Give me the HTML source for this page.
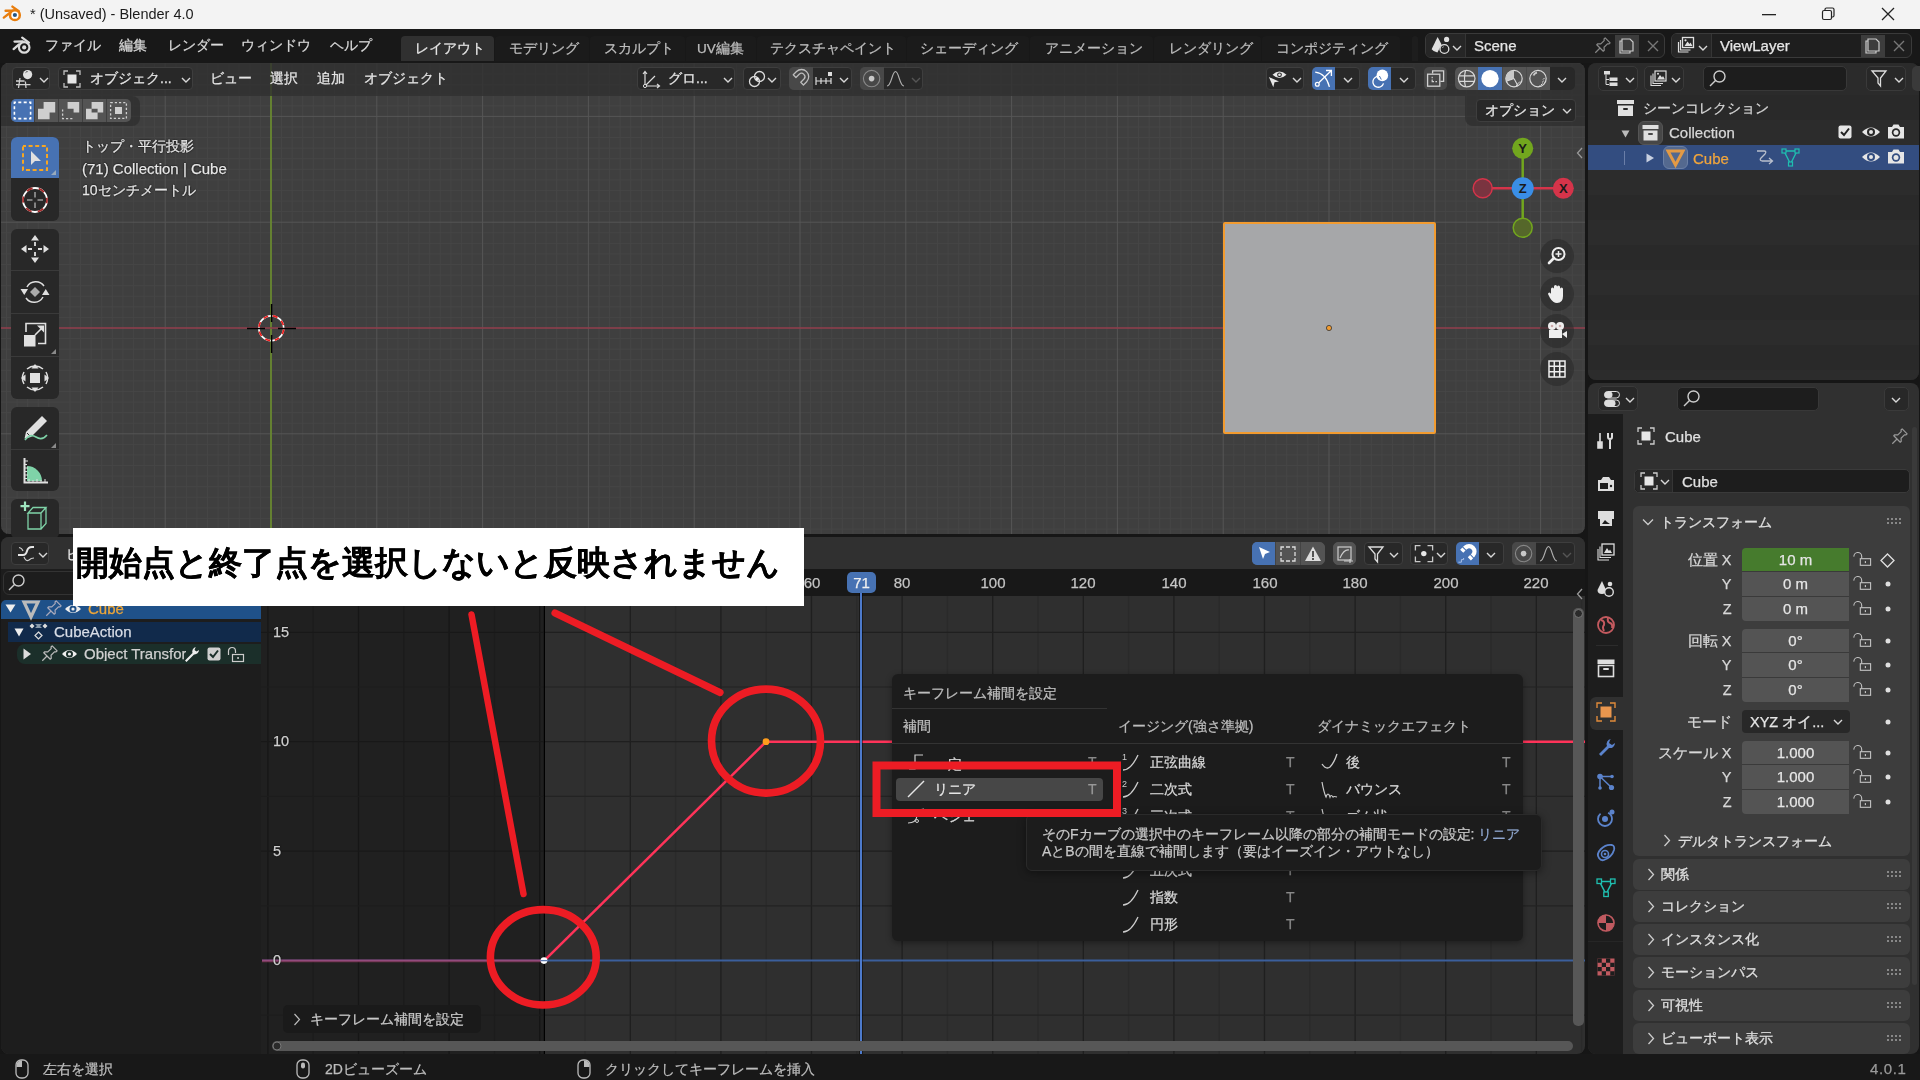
<!DOCTYPE html><html lang="ja"><head><meta charset="utf-8"><style>
*{box-sizing:border-box;margin:0;padding:0}
html,body{width:1920px;height:1080px;overflow:hidden;background:#161616;font-family:"Liberation Sans",sans-serif;color:#d6d6d6;font-size:14px}
.a{position:absolute}
.t{position:absolute;white-space:nowrap;line-height:1}
svg{overflow:visible}
.t{-webkit-font-smoothing:antialiased;will-change:transform;-webkit-text-stroke:0.25px currentColor}
</style></head><body><div class="a" style="left:0px;top:0px;width:1920px;height:29px;background:#f3f3f3;border-radius:0px;"></div>
<svg class="a" style="left:0px;top:0px;" width="30" height="29" viewBox="0 0 30 29"><path d="M12.4 6.6 L18.8 11.3 M5.6 10.7 L13.8 10.6 M3.8 17.6 L10 12.8" stroke="#e87d0d" stroke-width="2.4" stroke-linecap="round"/><circle cx="14.9" cy="15.2" r="4.9" fill="#fff" stroke="#e87d0d" stroke-width="2.5"/><circle cx="14.9" cy="15" r="2.1" fill="#265787"/></svg>
<div class="t" style="left:30px;top:6.5px;font-size:14.5px;color:#1b1b1b;-webkit-text-stroke:0">* (Unsaved) - Blender 4.0</div>
<svg class="a" style="left:1762px;top:14px;" width="18" height="2" viewBox="0 0 18 2"><rect width="14" height="1.3" fill="#222"/></svg>
<svg class="a" style="left:1821px;top:7px;" width="16" height="16" viewBox="0 0 16 16"><rect x="1.5" y="3.5" width="9" height="9" rx="1.5" fill="none" stroke="#222" stroke-width="1.2"/><path d="M4 3.5 V2.5 a1.5 1.5 0 0 1 1.5 -1.5 H11.5 a1.5 1.5 0 0 1 1.5 1.5 V8.5 a1.5 1.5 0 0 1 -1.5 1.5 H10.5" fill="none" stroke="#222" stroke-width="1.2"/></svg>
<svg class="a" style="left:1881px;top:7px;" width="16" height="16" viewBox="0 0 16 16"><path d="M1 1 L13 13 M13 1 L1 13" stroke="#222" stroke-width="1.3"/></svg>
<div class="a" style="left:0px;top:29px;width:1920px;height:34px;background:#181818;border-radius:0px;"></div>
<svg class="a" style="left:8px;top:32px;" width="30" height="28" viewBox="0 0 30 28"><path d="M14.2 5.6 L20.9 10.6 M6.5 9.6 L14.8 9.5 M5.6 17.1 L11 12.4" stroke="#dcdcdc" stroke-width="2.3" stroke-linecap="round"/><circle cx="16.2" cy="15.4" r="5.25" fill="#181818" stroke="#dcdcdc" stroke-width="2.2"/><circle cx="16.2" cy="15.4" r="2.1" fill="#dcdcdc"/></svg>
<div class="t" style="left:45px;top:38.5px;font-size:13.6px;color:#dadada;">ファイル</div>
<div class="t" style="left:119px;top:38.5px;font-size:13.6px;color:#dadada;">編集</div>
<div class="t" style="left:167.5px;top:38.5px;font-size:13.6px;color:#dadada;">レンダー</div>
<div class="t" style="left:240.5px;top:38.5px;font-size:13.6px;color:#dadada;">ウィンドウ</div>
<div class="t" style="left:330px;top:38.5px;font-size:13.6px;color:#dadada;">ヘルプ</div>
<div class="a" style="left:401px;top:36px;width:93px;height:25px;background:#303030;border-radius:4px 4px 0 0;"></div>
<div class="t" style="left:414.5px;top:41.5px;font-size:13.5px;color:#e6e6e6;">レイアウト</div>
<div class="a" style="left:495px;top:36px;width:94px;height:25px;background:#1b1b1b;border-radius:4px 4px 0 0;"></div>
<div class="t" style="left:508.5px;top:41.5px;font-size:13.5px;color:#bdbdbd;">モデリング</div>
<div class="a" style="left:590px;top:36px;width:95px;height:25px;background:#1b1b1b;border-radius:4px 4px 0 0;"></div>
<div class="t" style="left:604px;top:41.5px;font-size:13.5px;color:#bdbdbd;">スカルプト</div>
<div class="a" style="left:686px;top:36px;width:70px;height:25px;background:#1b1b1b;border-radius:4px 4px 0 0;"></div>
<div class="t" style="left:697px;top:41.5px;font-size:13.5px;color:#bdbdbd;">UV編集</div>
<div class="a" style="left:757px;top:36px;width:149px;height:25px;background:#1b1b1b;border-radius:4px 4px 0 0;"></div>
<div class="t" style="left:770px;top:41.5px;font-size:13.5px;color:#bdbdbd;">テクスチャペイント</div>
<div class="a" style="left:907px;top:36px;width:122px;height:25px;background:#1b1b1b;border-radius:4px 4px 0 0;"></div>
<div class="t" style="left:920px;top:41.5px;font-size:13.5px;color:#bdbdbd;">シェーディング</div>
<div class="a" style="left:1030px;top:36px;width:123px;height:25px;background:#1b1b1b;border-radius:4px 4px 0 0;"></div>
<div class="t" style="left:1044.5px;top:41.5px;font-size:13.5px;color:#bdbdbd;">アニメーション</div>
<div class="a" style="left:1154px;top:36px;width:107px;height:25px;background:#1b1b1b;border-radius:4px 4px 0 0;"></div>
<div class="t" style="left:1168.5px;top:41.5px;font-size:13.5px;color:#bdbdbd;">レンダリング</div>
<div class="a" style="left:1262px;top:36px;width:138px;height:25px;background:#1b1b1b;border-radius:4px 4px 0 0;"></div>
<div class="t" style="left:1276px;top:41.5px;font-size:13.5px;color:#bdbdbd;">コンポジティング</div>
<div class="a" style="left:1412px;top:36px;width:6px;height:25px;background:#1d1d1d;border-radius:4px 4px 0 0;"></div>
<div class="a" style="left:1425px;top:33px;width:240px;height:25px;background:#1e1e1e;border-radius:6px;border:1px solid #3a3a3a"></div>
<div class="a" style="left:1426px;top:34px;width:39px;height:23px;background:#262626;border-radius:5px 0 0 5px;"></div>
<div class="a" style="left:1465px;top:34px;width:1px;height:23px;background:#353535;border-radius:0px;"></div>
<svg class="a" style="left:1425px;top:33px;" width="40" height="25" viewBox="0 0 40 25"><path d="M12.6 4 L6.6 16.2 Q8.6 18.7 12.4 19.6 L16.6 11.4 Z" fill="#e0e0e0"/><circle cx="21.6" cy="6.4" r="2.6" fill="#e0e0e0"/><circle cx="19.4" cy="16" r="4.4" fill="#262626" stroke="#e0e0e0" stroke-width="1.3"/><path d="M17.4 14.6 L18.6 13.8" stroke="#ccc" stroke-width="1"/></svg>
<svg class="a" style="left:1452px;top:45px;" width="10" height="6" viewBox="0 0 10 6"><path d="M1 1 L5 5 L9 1" fill="none" stroke="#d8d8d8" stroke-width="1.4"/></svg>
<div class="t" style="left:1474px;top:38px;font-size:15px;color:#e6e6e6;">Scene</div>
<svg class="a" style="left:1592px;top:37px;" width="20" height="20" viewBox="0 0 20 20"><g transform="rotate(45 10 9)"><path d="M6.5 1 H13.5 V2.6 L12.3 3.6 V8.4 L14.6 10.4 V11.8 H5.4 V10.4 L7.7 8.4 V3.6 L6.5 2.6 Z" fill="none" stroke="#888" stroke-width="1.2" stroke-linejoin="round"/><path d="M10 11.8 V18.5" stroke="#888" stroke-width="1.2"/></g></svg>
<div class="a" style="left:1615px;top:35px;width:24px;height:22px;background:#3d3d3d;border-radius:0px;"></div>
<svg class="a" style="left:1617px;top:37px;" width="20" height="18" viewBox="0 0 20 18"><path d="M5 4 H3 V16 H13 V14" fill="none" stroke="#ccc" stroke-width="1.2"/><path d="M5 2 H13 L16 5 V14 H5Z" fill="none" stroke="#ccc" stroke-width="1.2"/></svg>
<svg class="a" style="left:1645px;top:38px;" width="16" height="16" viewBox="0 0 16 16"><path d="M3 3 L13 13 M13 3 L3 13" stroke="#777" stroke-width="1.4"/></svg>
<div class="a" style="left:1671px;top:33px;width:241px;height:25px;background:#1e1e1e;border-radius:6px;border:1px solid #3a3a3a"></div>
<div class="a" style="left:1672px;top:34px;width:39px;height:23px;background:#262626;border-radius:5px 0 0 5px;"></div>
<div class="a" style="left:1711px;top:34px;width:1px;height:23px;background:#353535;border-radius:0px;"></div>
<svg class="a" style="left:1672px;top:33px;" width="40" height="25" viewBox="0 0 40 25"><rect x="10.5" y="4.5" width="11" height="10" fill="#262626" stroke="#e0e0e0" stroke-width="1.3"/><path d="M12.5 13 L15.5 8.5 L17.5 11 L18.5 9.5 L20.5 13Z" fill="#e0e0e0"/><circle cx="13.5" cy="7.3" r="1.1" fill="#e0e0e0"/><path d="M8.5 7 V17 H18.5 M6.5 9 V19 H16.5" fill="none" stroke="#e0e0e0" stroke-width="1.2"/></svg>
<svg class="a" style="left:1698px;top:45px;" width="10" height="6" viewBox="0 0 10 6"><path d="M1 1 L5 5 L9 1" fill="none" stroke="#d8d8d8" stroke-width="1.4"/></svg>
<div class="t" style="left:1720px;top:38px;font-size:15px;color:#e6e6e6;">ViewLayer</div>
<div class="a" style="left:1861px;top:35px;width:24px;height:22px;background:#3d3d3d;border-radius:0px;"></div>
<svg class="a" style="left:1863px;top:37px;" width="20" height="18" viewBox="0 0 20 18"><path d="M5 4 H3 V16 H13 V14" fill="none" stroke="#ccc" stroke-width="1.2"/><path d="M5 2 H13 L16 5 V14 H5Z" fill="none" stroke="#ccc" stroke-width="1.2"/></svg>
<svg class="a" style="left:1891px;top:38px;" width="16" height="16" viewBox="0 0 16 16"><path d="M3 3 L13 13 M13 3 L3 13" stroke="#777" stroke-width="1.4"/></svg>
<div class="a" style="left:1px;top:63px;width:1584px;height:471px;border-radius:8px;overflow:hidden;background:#3f3f3f">
<svg class="a" style="left:0;top:0" width="1584" height="471"><line x1="-5.08" y1="0" x2="-5.08" y2="471" stroke="#464646" stroke-width="1"/><line x1="5.50" y1="0" x2="5.50" y2="471" stroke="#464646" stroke-width="1"/><line x1="16.08" y1="0" x2="16.08" y2="471" stroke="#464646" stroke-width="1"/><line x1="26.66" y1="0" x2="26.66" y2="471" stroke="#464646" stroke-width="1"/><line x1="37.24" y1="0" x2="37.24" y2="471" stroke="#464646" stroke-width="1"/><line x1="47.82" y1="0" x2="47.82" y2="471" stroke="#464646" stroke-width="1"/><line x1="68.98" y1="0" x2="68.98" y2="471" stroke="#464646" stroke-width="1"/><line x1="79.56" y1="0" x2="79.56" y2="471" stroke="#464646" stroke-width="1"/><line x1="90.14" y1="0" x2="90.14" y2="471" stroke="#464646" stroke-width="1"/><line x1="100.72" y1="0" x2="100.72" y2="471" stroke="#464646" stroke-width="1"/><line x1="111.30" y1="0" x2="111.30" y2="471" stroke="#464646" stroke-width="1"/><line x1="121.88" y1="0" x2="121.88" y2="471" stroke="#464646" stroke-width="1"/><line x1="132.46" y1="0" x2="132.46" y2="471" stroke="#464646" stroke-width="1"/><line x1="143.04" y1="0" x2="143.04" y2="471" stroke="#464646" stroke-width="1"/><line x1="153.62" y1="0" x2="153.62" y2="471" stroke="#464646" stroke-width="1"/><line x1="174.78" y1="0" x2="174.78" y2="471" stroke="#464646" stroke-width="1"/><line x1="185.36" y1="0" x2="185.36" y2="471" stroke="#464646" stroke-width="1"/><line x1="195.94" y1="0" x2="195.94" y2="471" stroke="#464646" stroke-width="1"/><line x1="206.52" y1="0" x2="206.52" y2="471" stroke="#464646" stroke-width="1"/><line x1="217.10" y1="0" x2="217.10" y2="471" stroke="#464646" stroke-width="1"/><line x1="227.68" y1="0" x2="227.68" y2="471" stroke="#464646" stroke-width="1"/><line x1="238.26" y1="0" x2="238.26" y2="471" stroke="#464646" stroke-width="1"/><line x1="248.84" y1="0" x2="248.84" y2="471" stroke="#464646" stroke-width="1"/><line x1="259.42" y1="0" x2="259.42" y2="471" stroke="#464646" stroke-width="1"/><line x1="280.58" y1="0" x2="280.58" y2="471" stroke="#464646" stroke-width="1"/><line x1="291.16" y1="0" x2="291.16" y2="471" stroke="#464646" stroke-width="1"/><line x1="301.74" y1="0" x2="301.74" y2="471" stroke="#464646" stroke-width="1"/><line x1="312.32" y1="0" x2="312.32" y2="471" stroke="#464646" stroke-width="1"/><line x1="322.90" y1="0" x2="322.90" y2="471" stroke="#464646" stroke-width="1"/><line x1="333.48" y1="0" x2="333.48" y2="471" stroke="#464646" stroke-width="1"/><line x1="344.06" y1="0" x2="344.06" y2="471" stroke="#464646" stroke-width="1"/><line x1="354.64" y1="0" x2="354.64" y2="471" stroke="#464646" stroke-width="1"/><line x1="365.22" y1="0" x2="365.22" y2="471" stroke="#464646" stroke-width="1"/><line x1="386.38" y1="0" x2="386.38" y2="471" stroke="#464646" stroke-width="1"/><line x1="396.96" y1="0" x2="396.96" y2="471" stroke="#464646" stroke-width="1"/><line x1="407.54" y1="0" x2="407.54" y2="471" stroke="#464646" stroke-width="1"/><line x1="418.12" y1="0" x2="418.12" y2="471" stroke="#464646" stroke-width="1"/><line x1="428.70" y1="0" x2="428.70" y2="471" stroke="#464646" stroke-width="1"/><line x1="439.28" y1="0" x2="439.28" y2="471" stroke="#464646" stroke-width="1"/><line x1="449.86" y1="0" x2="449.86" y2="471" stroke="#464646" stroke-width="1"/><line x1="460.44" y1="0" x2="460.44" y2="471" stroke="#464646" stroke-width="1"/><line x1="471.02" y1="0" x2="471.02" y2="471" stroke="#464646" stroke-width="1"/><line x1="492.18" y1="0" x2="492.18" y2="471" stroke="#464646" stroke-width="1"/><line x1="502.76" y1="0" x2="502.76" y2="471" stroke="#464646" stroke-width="1"/><line x1="513.34" y1="0" x2="513.34" y2="471" stroke="#464646" stroke-width="1"/><line x1="523.92" y1="0" x2="523.92" y2="471" stroke="#464646" stroke-width="1"/><line x1="534.50" y1="0" x2="534.50" y2="471" stroke="#464646" stroke-width="1"/><line x1="545.08" y1="0" x2="545.08" y2="471" stroke="#464646" stroke-width="1"/><line x1="555.66" y1="0" x2="555.66" y2="471" stroke="#464646" stroke-width="1"/><line x1="566.24" y1="0" x2="566.24" y2="471" stroke="#464646" stroke-width="1"/><line x1="576.82" y1="0" x2="576.82" y2="471" stroke="#464646" stroke-width="1"/><line x1="597.98" y1="0" x2="597.98" y2="471" stroke="#464646" stroke-width="1"/><line x1="608.56" y1="0" x2="608.56" y2="471" stroke="#464646" stroke-width="1"/><line x1="619.14" y1="0" x2="619.14" y2="471" stroke="#464646" stroke-width="1"/><line x1="629.72" y1="0" x2="629.72" y2="471" stroke="#464646" stroke-width="1"/><line x1="640.30" y1="0" x2="640.30" y2="471" stroke="#464646" stroke-width="1"/><line x1="650.88" y1="0" x2="650.88" y2="471" stroke="#464646" stroke-width="1"/><line x1="661.46" y1="0" x2="661.46" y2="471" stroke="#464646" stroke-width="1"/><line x1="672.04" y1="0" x2="672.04" y2="471" stroke="#464646" stroke-width="1"/><line x1="682.62" y1="0" x2="682.62" y2="471" stroke="#464646" stroke-width="1"/><line x1="703.78" y1="0" x2="703.78" y2="471" stroke="#464646" stroke-width="1"/><line x1="714.36" y1="0" x2="714.36" y2="471" stroke="#464646" stroke-width="1"/><line x1="724.94" y1="0" x2="724.94" y2="471" stroke="#464646" stroke-width="1"/><line x1="735.52" y1="0" x2="735.52" y2="471" stroke="#464646" stroke-width="1"/><line x1="746.10" y1="0" x2="746.10" y2="471" stroke="#464646" stroke-width="1"/><line x1="756.68" y1="0" x2="756.68" y2="471" stroke="#464646" stroke-width="1"/><line x1="767.26" y1="0" x2="767.26" y2="471" stroke="#464646" stroke-width="1"/><line x1="777.84" y1="0" x2="777.84" y2="471" stroke="#464646" stroke-width="1"/><line x1="788.42" y1="0" x2="788.42" y2="471" stroke="#464646" stroke-width="1"/><line x1="809.58" y1="0" x2="809.58" y2="471" stroke="#464646" stroke-width="1"/><line x1="820.16" y1="0" x2="820.16" y2="471" stroke="#464646" stroke-width="1"/><line x1="830.74" y1="0" x2="830.74" y2="471" stroke="#464646" stroke-width="1"/><line x1="841.32" y1="0" x2="841.32" y2="471" stroke="#464646" stroke-width="1"/><line x1="851.90" y1="0" x2="851.90" y2="471" stroke="#464646" stroke-width="1"/><line x1="862.48" y1="0" x2="862.48" y2="471" stroke="#464646" stroke-width="1"/><line x1="873.06" y1="0" x2="873.06" y2="471" stroke="#464646" stroke-width="1"/><line x1="883.64" y1="0" x2="883.64" y2="471" stroke="#464646" stroke-width="1"/><line x1="894.22" y1="0" x2="894.22" y2="471" stroke="#464646" stroke-width="1"/><line x1="915.38" y1="0" x2="915.38" y2="471" stroke="#464646" stroke-width="1"/><line x1="925.96" y1="0" x2="925.96" y2="471" stroke="#464646" stroke-width="1"/><line x1="936.54" y1="0" x2="936.54" y2="471" stroke="#464646" stroke-width="1"/><line x1="947.12" y1="0" x2="947.12" y2="471" stroke="#464646" stroke-width="1"/><line x1="957.70" y1="0" x2="957.70" y2="471" stroke="#464646" stroke-width="1"/><line x1="968.28" y1="0" x2="968.28" y2="471" stroke="#464646" stroke-width="1"/><line x1="978.86" y1="0" x2="978.86" y2="471" stroke="#464646" stroke-width="1"/><line x1="989.44" y1="0" x2="989.44" y2="471" stroke="#464646" stroke-width="1"/><line x1="1000.02" y1="0" x2="1000.02" y2="471" stroke="#464646" stroke-width="1"/><line x1="1021.18" y1="0" x2="1021.18" y2="471" stroke="#464646" stroke-width="1"/><line x1="1031.76" y1="0" x2="1031.76" y2="471" stroke="#464646" stroke-width="1"/><line x1="1042.34" y1="0" x2="1042.34" y2="471" stroke="#464646" stroke-width="1"/><line x1="1052.92" y1="0" x2="1052.92" y2="471" stroke="#464646" stroke-width="1"/><line x1="1063.50" y1="0" x2="1063.50" y2="471" stroke="#464646" stroke-width="1"/><line x1="1074.08" y1="0" x2="1074.08" y2="471" stroke="#464646" stroke-width="1"/><line x1="1084.66" y1="0" x2="1084.66" y2="471" stroke="#464646" stroke-width="1"/><line x1="1095.24" y1="0" x2="1095.24" y2="471" stroke="#464646" stroke-width="1"/><line x1="1105.82" y1="0" x2="1105.82" y2="471" stroke="#464646" stroke-width="1"/><line x1="1126.98" y1="0" x2="1126.98" y2="471" stroke="#464646" stroke-width="1"/><line x1="1137.56" y1="0" x2="1137.56" y2="471" stroke="#464646" stroke-width="1"/><line x1="1148.14" y1="0" x2="1148.14" y2="471" stroke="#464646" stroke-width="1"/><line x1="1158.72" y1="0" x2="1158.72" y2="471" stroke="#464646" stroke-width="1"/><line x1="1169.30" y1="0" x2="1169.30" y2="471" stroke="#464646" stroke-width="1"/><line x1="1179.88" y1="0" x2="1179.88" y2="471" stroke="#464646" stroke-width="1"/><line x1="1190.46" y1="0" x2="1190.46" y2="471" stroke="#464646" stroke-width="1"/><line x1="1201.04" y1="0" x2="1201.04" y2="471" stroke="#464646" stroke-width="1"/><line x1="1211.62" y1="0" x2="1211.62" y2="471" stroke="#464646" stroke-width="1"/><line x1="1232.78" y1="0" x2="1232.78" y2="471" stroke="#464646" stroke-width="1"/><line x1="1243.36" y1="0" x2="1243.36" y2="471" stroke="#464646" stroke-width="1"/><line x1="1253.94" y1="0" x2="1253.94" y2="471" stroke="#464646" stroke-width="1"/><line x1="1264.52" y1="0" x2="1264.52" y2="471" stroke="#464646" stroke-width="1"/><line x1="1275.10" y1="0" x2="1275.10" y2="471" stroke="#464646" stroke-width="1"/><line x1="1285.68" y1="0" x2="1285.68" y2="471" stroke="#464646" stroke-width="1"/><line x1="1296.26" y1="0" x2="1296.26" y2="471" stroke="#464646" stroke-width="1"/><line x1="1306.84" y1="0" x2="1306.84" y2="471" stroke="#464646" stroke-width="1"/><line x1="1317.42" y1="0" x2="1317.42" y2="471" stroke="#464646" stroke-width="1"/><line x1="1338.58" y1="0" x2="1338.58" y2="471" stroke="#464646" stroke-width="1"/><line x1="1349.16" y1="0" x2="1349.16" y2="471" stroke="#464646" stroke-width="1"/><line x1="1359.74" y1="0" x2="1359.74" y2="471" stroke="#464646" stroke-width="1"/><line x1="1370.32" y1="0" x2="1370.32" y2="471" stroke="#464646" stroke-width="1"/><line x1="1380.90" y1="0" x2="1380.90" y2="471" stroke="#464646" stroke-width="1"/><line x1="1391.48" y1="0" x2="1391.48" y2="471" stroke="#464646" stroke-width="1"/><line x1="1402.06" y1="0" x2="1402.06" y2="471" stroke="#464646" stroke-width="1"/><line x1="1412.64" y1="0" x2="1412.64" y2="471" stroke="#464646" stroke-width="1"/><line x1="1423.22" y1="0" x2="1423.22" y2="471" stroke="#464646" stroke-width="1"/><line x1="1444.38" y1="0" x2="1444.38" y2="471" stroke="#464646" stroke-width="1"/><line x1="1454.96" y1="0" x2="1454.96" y2="471" stroke="#464646" stroke-width="1"/><line x1="1465.54" y1="0" x2="1465.54" y2="471" stroke="#464646" stroke-width="1"/><line x1="1476.12" y1="0" x2="1476.12" y2="471" stroke="#464646" stroke-width="1"/><line x1="1486.70" y1="0" x2="1486.70" y2="471" stroke="#464646" stroke-width="1"/><line x1="1497.28" y1="0" x2="1497.28" y2="471" stroke="#464646" stroke-width="1"/><line x1="1507.86" y1="0" x2="1507.86" y2="471" stroke="#464646" stroke-width="1"/><line x1="1518.44" y1="0" x2="1518.44" y2="471" stroke="#464646" stroke-width="1"/><line x1="1529.02" y1="0" x2="1529.02" y2="471" stroke="#464646" stroke-width="1"/><line x1="1550.18" y1="0" x2="1550.18" y2="471" stroke="#464646" stroke-width="1"/><line x1="1560.76" y1="0" x2="1560.76" y2="471" stroke="#464646" stroke-width="1"/><line x1="1571.34" y1="0" x2="1571.34" y2="471" stroke="#464646" stroke-width="1"/><line x1="1581.92" y1="0" x2="1581.92" y2="471" stroke="#464646" stroke-width="1"/><line x1="1592.50" y1="0" x2="1592.50" y2="471" stroke="#464646" stroke-width="1"/><line x1="0" y1="-10.08" x2="1584" y2="-10.08" stroke="#464646" stroke-width="1"/><line x1="0" y1="0.50" x2="1584" y2="0.50" stroke="#464646" stroke-width="1"/><line x1="0" y1="11.08" x2="1584" y2="11.08" stroke="#464646" stroke-width="1"/><line x1="0" y1="21.66" x2="1584" y2="21.66" stroke="#464646" stroke-width="1"/><line x1="0" y1="32.24" x2="1584" y2="32.24" stroke="#464646" stroke-width="1"/><line x1="0" y1="42.82" x2="1584" y2="42.82" stroke="#464646" stroke-width="1"/><line x1="0" y1="63.98" x2="1584" y2="63.98" stroke="#464646" stroke-width="1"/><line x1="0" y1="74.56" x2="1584" y2="74.56" stroke="#464646" stroke-width="1"/><line x1="0" y1="85.14" x2="1584" y2="85.14" stroke="#464646" stroke-width="1"/><line x1="0" y1="95.72" x2="1584" y2="95.72" stroke="#464646" stroke-width="1"/><line x1="0" y1="106.30" x2="1584" y2="106.30" stroke="#464646" stroke-width="1"/><line x1="0" y1="116.88" x2="1584" y2="116.88" stroke="#464646" stroke-width="1"/><line x1="0" y1="127.46" x2="1584" y2="127.46" stroke="#464646" stroke-width="1"/><line x1="0" y1="138.04" x2="1584" y2="138.04" stroke="#464646" stroke-width="1"/><line x1="0" y1="148.62" x2="1584" y2="148.62" stroke="#464646" stroke-width="1"/><line x1="0" y1="169.78" x2="1584" y2="169.78" stroke="#464646" stroke-width="1"/><line x1="0" y1="180.36" x2="1584" y2="180.36" stroke="#464646" stroke-width="1"/><line x1="0" y1="190.94" x2="1584" y2="190.94" stroke="#464646" stroke-width="1"/><line x1="0" y1="201.52" x2="1584" y2="201.52" stroke="#464646" stroke-width="1"/><line x1="0" y1="212.10" x2="1584" y2="212.10" stroke="#464646" stroke-width="1"/><line x1="0" y1="222.68" x2="1584" y2="222.68" stroke="#464646" stroke-width="1"/><line x1="0" y1="233.26" x2="1584" y2="233.26" stroke="#464646" stroke-width="1"/><line x1="0" y1="243.84" x2="1584" y2="243.84" stroke="#464646" stroke-width="1"/><line x1="0" y1="254.42" x2="1584" y2="254.42" stroke="#464646" stroke-width="1"/><line x1="0" y1="275.58" x2="1584" y2="275.58" stroke="#464646" stroke-width="1"/><line x1="0" y1="286.16" x2="1584" y2="286.16" stroke="#464646" stroke-width="1"/><line x1="0" y1="296.74" x2="1584" y2="296.74" stroke="#464646" stroke-width="1"/><line x1="0" y1="307.32" x2="1584" y2="307.32" stroke="#464646" stroke-width="1"/><line x1="0" y1="317.90" x2="1584" y2="317.90" stroke="#464646" stroke-width="1"/><line x1="0" y1="328.48" x2="1584" y2="328.48" stroke="#464646" stroke-width="1"/><line x1="0" y1="339.06" x2="1584" y2="339.06" stroke="#464646" stroke-width="1"/><line x1="0" y1="349.64" x2="1584" y2="349.64" stroke="#464646" stroke-width="1"/><line x1="0" y1="360.22" x2="1584" y2="360.22" stroke="#464646" stroke-width="1"/><line x1="0" y1="381.38" x2="1584" y2="381.38" stroke="#464646" stroke-width="1"/><line x1="0" y1="391.96" x2="1584" y2="391.96" stroke="#464646" stroke-width="1"/><line x1="0" y1="402.54" x2="1584" y2="402.54" stroke="#464646" stroke-width="1"/><line x1="0" y1="413.12" x2="1584" y2="413.12" stroke="#464646" stroke-width="1"/><line x1="0" y1="423.70" x2="1584" y2="423.70" stroke="#464646" stroke-width="1"/><line x1="0" y1="434.28" x2="1584" y2="434.28" stroke="#464646" stroke-width="1"/><line x1="0" y1="444.86" x2="1584" y2="444.86" stroke="#464646" stroke-width="1"/><line x1="0" y1="455.44" x2="1584" y2="455.44" stroke="#464646" stroke-width="1"/><line x1="0" y1="466.02" x2="1584" y2="466.02" stroke="#464646" stroke-width="1"/><line x1="164.20" y1="0" x2="164.20" y2="471" stroke="#565656" stroke-width="1"/><line x1="270.00" y1="0" x2="270.00" y2="471" stroke="#565656" stroke-width="1"/><line x1="375.80" y1="0" x2="375.80" y2="471" stroke="#565656" stroke-width="1"/><line x1="481.60" y1="0" x2="481.60" y2="471" stroke="#565656" stroke-width="1"/><line x1="587.40" y1="0" x2="587.40" y2="471" stroke="#565656" stroke-width="1"/><line x1="693.20" y1="0" x2="693.20" y2="471" stroke="#565656" stroke-width="1"/><line x1="799.00" y1="0" x2="799.00" y2="471" stroke="#565656" stroke-width="1"/><line x1="904.80" y1="0" x2="904.80" y2="471" stroke="#565656" stroke-width="1"/><line x1="1010.60" y1="0" x2="1010.60" y2="471" stroke="#565656" stroke-width="1"/><line x1="1116.40" y1="0" x2="1116.40" y2="471" stroke="#565656" stroke-width="1"/><line x1="1222.20" y1="0" x2="1222.20" y2="471" stroke="#565656" stroke-width="1"/><line x1="1328.00" y1="0" x2="1328.00" y2="471" stroke="#565656" stroke-width="1"/><line x1="1433.80" y1="0" x2="1433.80" y2="471" stroke="#565656" stroke-width="1"/><line x1="1539.60" y1="0" x2="1539.60" y2="471" stroke="#565656" stroke-width="1"/><line x1="1645.40" y1="0" x2="1645.40" y2="471" stroke="#565656" stroke-width="1"/><line x1="0" y1="-52.40" x2="1584" y2="-52.40" stroke="#565656" stroke-width="1"/><line x1="0" y1="53.40" x2="1584" y2="53.40" stroke="#565656" stroke-width="1"/><line x1="0" y1="159.20" x2="1584" y2="159.20" stroke="#565656" stroke-width="1"/><line x1="0" y1="265.00" x2="1584" y2="265.00" stroke="#565656" stroke-width="1"/><line x1="0" y1="370.80" x2="1584" y2="370.80" stroke="#565656" stroke-width="1"/><line x1="0" y1="476.60" x2="1584" y2="476.60" stroke="#565656" stroke-width="1"/><line x1="270" y1="0" x2="270" y2="471" stroke="#6b8f2b" stroke-width="1.6"/><line x1="0" y1="265" x2="1584" y2="265" stroke="#8f3b4a" stroke-width="1.6"/></svg>
</div>
<div class="a" style="left:1px;top:63px;width:1584px;height:33px;background:rgba(48,48,48,0.8);border-radius:8px 8px 0 0;"></div>
<div class="a" style="left:12px;top:67px;width:38px;height:23px;background:#282828;border-radius:4px;border:1px solid #3e3e3e"></div>
<svg class="a" style="left:12px;top:67px;" width="38" height="23" viewBox="0 0 38 23"><circle cx="15.6" cy="7.6" r="4.6" fill="#e0e0e0"/><path d="M13.6 5.6 A2.4 2.4 0 0 1 15.6 4.6" stroke="#282828" stroke-width="0.9" fill="none"/><path d="M4 14 H12.5 M4 17.6 H18.5 M8 11 L6.5 21 M13.4 14.5 L14 21" stroke="#d0d0d0" stroke-width="1.3" fill="none"/></svg>
<svg class="a" style="left:39px;top:77px;" width="10" height="6" viewBox="0 0 10 6"><path d="M1 1 L5 5 L9 1" fill="none" stroke="#d8d8d8" stroke-width="1.4"/></svg>
<div class="a" style="left:58px;top:67px;width:135px;height:23px;background:#282828;border-radius:4px;border:1px solid #3e3e3e"></div>
<svg class="a" style="left:63px;top:70px;" width="18" height="18" viewBox="0 0 18 18"><path d="M1 5 V1 H5 M13 1 H17 V5 M17 13 V17 H13 M5 17 H1 V13" stroke="#bdbdbd" stroke-width="1.3" fill="none"/><rect x="4.5" y="4.5" width="9" height="9" fill="#e6e6e6"/></svg>
<div class="t" style="left:90px;top:71px;font-size:14px;color:#e6e6e6;">オブジェク...</div>
<svg class="a" style="left:181px;top:77px;" width="10" height="6" viewBox="0 0 10 6"><path d="M1 1 L5 5 L9 1" fill="none" stroke="#d8d8d8" stroke-width="1.4"/></svg>
<div class="t" style="left:210px;top:71px;font-size:14px;color:#e6e6e6;">ビュー</div>
<div class="t" style="left:270px;top:71px;font-size:14px;color:#e6e6e6;">選択</div>
<div class="t" style="left:317px;top:71px;font-size:14px;color:#e6e6e6;">追加</div>
<div class="t" style="left:364px;top:71px;font-size:14px;color:#e6e6e6;">オブジェクト</div>
<div class="a" style="left:637px;top:67px;width:98px;height:23px;background:#282828;border-radius:4px;border:1px solid #3e3e3e"></div>
<svg class="a" style="left:642px;top:70px;" width="20" height="18" viewBox="0 0 20 18"><path d="M3 16 V2 M1 4 L3 1.5 L5 4 M3 16 H17 M15 14 L17.5 16 L15 18 M3 16 L13 6" stroke="#dcdcdc" stroke-width="1.2" fill="none"/><circle cx="3" cy="16" r="1.6" fill="#282828" stroke="#dcdcdc"/></svg>
<div class="t" style="left:668px;top:71px;font-size:14px;color:#e6e6e6;">グロ...</div>
<svg class="a" style="left:723px;top:77px;" width="10" height="6" viewBox="0 0 10 6"><path d="M1 1 L5 5 L9 1" fill="none" stroke="#d8d8d8" stroke-width="1.4"/></svg>
<div class="a" style="left:743px;top:67px;width:38px;height:23px;background:#282828;border-radius:4px;border:1px solid #3e3e3e"></div>
<svg class="a" style="left:748px;top:70px;" width="20" height="18" viewBox="0 0 20 18"><circle cx="6.5" cy="11.5" r="5" fill="none" stroke="#dcdcdc" stroke-width="1.3"/><circle cx="11.5" cy="6.5" r="5" fill="none" stroke="#dcdcdc" stroke-width="1.3"/><circle cx="9" cy="9" r="1.5" fill="#eee"/></svg>
<svg class="a" style="left:767px;top:77px;" width="10" height="6" viewBox="0 0 10 6"><path d="M1 1 L5 5 L9 1" fill="none" stroke="#d8d8d8" stroke-width="1.4"/></svg>
<div class="a" style="left:789px;top:67px;width:63px;height:23px;background:#282828;border-radius:4px;border:1px solid #3e3e3e"></div>
<div class="a" style="left:789px;top:67px;width:24px;height:23px;background:#484848;border-radius:5px 0 0 5px;"></div>
<svg class="a" style="left:789px;top:67px;" width="24" height="23" viewBox="0 0 24 23"><path d="M4.26 7.76 L7.51 4.51 A7.2 7.2 0 0 1 17.69 14.69 L14.44 17.94 L11.75 15.26 L15.00 12.00 A3.4 3.4 0 0 0 10.20 7.20 L6.94 10.45 Z" fill="none" stroke="#bdbdbd" stroke-width="1.3" stroke-linejoin="round"/></svg>
<svg class="a" style="left:815px;top:72px;" width="18" height="14" viewBox="0 0 18 14"><path d="M1 5 V13 M1 9 H16 M6 6 V12 M11 6 V12 M16 6 V12" stroke="#ddd" stroke-width="1.2" fill="none"/><rect x="13" y="0" width="4" height="4" fill="#ddd"/></svg>
<svg class="a" style="left:839px;top:77px;" width="10" height="6" viewBox="0 0 10 6"><path d="M1 1 L5 5 L9 1" fill="none" stroke="#d8d8d8" stroke-width="1.4"/></svg>
<div class="a" style="left:860px;top:67px;width:63px;height:23px;background:#282828;border-radius:4px;border:1px solid #3e3e3e"></div>
<div class="a" style="left:860px;top:67px;width:24px;height:23px;background:#484848;border-radius:5px 0 0 5px;"></div>
<svg class="a" style="left:860px;top:67px;" width="24" height="23" viewBox="0 0 24 23"><circle cx="11.6" cy="11.6" r="8.2" fill="none" stroke="#888" stroke-width="1.1"/><circle cx="11.6" cy="11.6" r="2.8" fill="#c8c8c8"/></svg>
<svg class="a" style="left:886px;top:70px;" width="20" height="18" viewBox="0 0 20 18"><path d="M1 16 C5.5 16 6 1.5 9.5 1.5 C13 1.5 13.5 16 18 16" fill="none" stroke="#b0b0b0" stroke-width="1.2"/></svg>
<svg class="a" style="left:911px;top:77px;" width="10" height="6" viewBox="0 0 10 6"><path d="M1 1 L5 5 L9 1" fill="none" stroke="#555" stroke-width="1.4"/></svg>
<div class="a" style="left:1266px;top:67px;width:38px;height:23px;background:#282828;border-radius:4px;border:1px solid #3e3e3e"></div>
<svg class="a" style="left:1266px;top:67px;" width="38" height="23" viewBox="0 0 38 23"><path d="M6.5 4 Q13.5 -2.5 20.5 4 Q13.5 10.5 6.5 4Z" fill="#e6e6e6" transform="translate(0,3.8)"/><circle cx="13.5" cy="7.8" r="2.4" fill="#282828"/><circle cx="13.5" cy="7.8" r="1.3" fill="#e6e6e6"/><path d="M2.9 10 L7.3 20.2 L8.5 15.3 L13 14.5 Z" fill="#e6e6e6"/></svg>
<svg class="a" style="left:1292px;top:77px;" width="10" height="6" viewBox="0 0 10 6"><path d="M1 1 L5 5 L9 1" fill="none" stroke="#d8d8d8" stroke-width="1.4"/></svg>
<div class="a" style="left:1312px;top:67px;width:48px;height:23px;background:#282828;border-radius:4px;border:1px solid #3e3e3e"></div>
<div class="a" style="left:1312px;top:67px;width:23px;height:23px;background:#4772b3;border-radius:5px 0 0 5px;"></div>
<svg class="a" style="left:1312px;top:67px;" width="23" height="23" viewBox="0 0 23 23"><path d="M3.2 5.2 Q14 6.5 17.4 19.8" fill="none" stroke="#fff" stroke-width="1.3"/><circle cx="5.3" cy="17.3" r="1.9" fill="none" stroke="#fff" stroke-width="1.3"/><path d="M6.8 15.8 L19.4 3.5 M14 3.5 H19.4 V9" fill="none" stroke="#fff" stroke-width="1.3"/></svg>
<svg class="a" style="left:1343px;top:77px;" width="10" height="6" viewBox="0 0 10 6"><path d="M1 1 L5 5 L9 1" fill="none" stroke="#d8d8d8" stroke-width="1.4"/></svg>
<div class="a" style="left:1368px;top:67px;width:48px;height:23px;background:#282828;border-radius:4px;border:1px solid #3e3e3e"></div>
<div class="a" style="left:1368px;top:67px;width:23px;height:23px;background:#4772b3;border-radius:5px 0 0 5px;"></div>
<svg class="a" style="left:1368px;top:67px;" width="23" height="23" viewBox="0 0 23 23"><circle cx="14.3" cy="8.4" r="5.8" fill="#fff"/><path d="M11 9.5 A5.4 5.4 0 1 0 15.5 16.3" fill="none" stroke="#fff" stroke-width="1.3"/><path d="M11.4 9 L13.3 12.5" stroke="#4772b3" stroke-width="1"/></svg>
<svg class="a" style="left:1399px;top:77px;" width="10" height="6" viewBox="0 0 10 6"><path d="M1 1 L5 5 L9 1" fill="none" stroke="#d8d8d8" stroke-width="1.4"/></svg>
<div class="a" style="left:1424px;top:67px;width:23px;height:23px;background:#484848;border-radius:5px;"></div>
<svg class="a" style="left:1424px;top:67px;" width="23" height="23" viewBox="0 0 23 23"><path d="M8.6 6.6 V3.9 H19.6 V14.4 H16.4" fill="none" stroke="#d0d0d0" stroke-width="1.3"/><rect x="3.6" y="7.2" width="12.2" height="12" fill="none" stroke="#d0d0d0" stroke-width="1.3"/><path d="M8.2 9.8 V11.2 M8.2 12.6 V14.6 H10 M11.4 14.6 H13" stroke="#d0d0d0" stroke-width="1.2" fill="none"/></svg>
<div class="a" style="left:1455px;top:67px;width:120px;height:23px;background:#282828;border-radius:5px;"></div>
<div class="a" style="left:1455px;top:67px;width:23px;height:23px;background:#545454;border-radius:5px 0 0 5px;"></div>
<div class="a" style="left:1478px;top:67px;width:24px;height:23px;background:#4772b3;border-radius:0px;"></div>
<div class="a" style="left:1502px;top:67px;width:24px;height:23px;background:#545454;border-radius:0px;"></div>
<div class="a" style="left:1526px;top:67px;width:24px;height:23px;background:#545454;border-radius:0px;"></div>
<div class="a" style="left:1525.5px;top:67px;width:1px;height:23px;background:#4a4a4a;border-radius:0px;"></div>
<div class="a" style="left:1501.5px;top:67px;width:1px;height:23px;background:#4a4a4a;border-radius:0px;"></div>
<svg class="a" style="left:1455px;top:67px;" width="23" height="23" viewBox="0 0 23 23"><circle cx="11.7" cy="11.6" r="8.3" fill="none" stroke="#d8d8d8" stroke-width="1.2"/><path d="M10.5 3.5 Q8.5 11.5 10.5 19.8 M4 8.8 H19.5 M4 14.3 H19.5" fill="none" stroke="#d8d8d8" stroke-width="1.2"/></svg>
<svg class="a" style="left:1478px;top:67px;" width="24" height="23" viewBox="0 0 24 23"><circle cx="12" cy="11.6" r="8.7" fill="#fff"/></svg>
<svg class="a" style="left:1502px;top:67px;" width="24" height="23" viewBox="0 0 24 23"><circle cx="12" cy="11.6" r="8.2" fill="none" stroke="#d8d8d8" stroke-width="1.2"/><path d="M12 3.4 V11.6 L4.3 14.3 A8.2 8.2 0 0 1 12 3.4Z" fill="#c8c8c8"/><path d="M12 11.6 L4.3 14.3 M12 11.6 L16 19" stroke="#d8d8d8" stroke-width="1.1"/><path d="M16.5 16 L18 14.5 M15 17.5 L16.5 16 M14 19 L15.5 17.5" stroke="#d8d8d8" stroke-width="1"/></svg>
<svg class="a" style="left:1526px;top:67px;" width="24" height="23" viewBox="0 0 24 23"><circle cx="12" cy="11.6" r="8.2" fill="none" stroke="#d8d8d8" stroke-width="1.2"/><path d="M7.5 8.5 Q8.5 6 11 5.5" fill="none" stroke="#c8c8c8" stroke-width="2"/><path d="M18.5 11 L17 12.5 M17.8 13.8 L16 15.5 M16.5 16.5 L14.5 18.5 M14 18.8 L12.5 19.6" stroke="#d8d8d8" stroke-width="1"/></svg>
<svg class="a" style="left:1557px;top:77px;" width="10" height="6" viewBox="0 0 10 6"><path d="M1 1 L5 5 L9 1" fill="none" stroke="#d8d8d8" stroke-width="1.4"/></svg>
<div class="a" style="left:1px;top:96px;width:139px;height:30px;background:rgba(48,48,48,0.8);border-radius:0 8px 8px 0;"></div>
<div class="a" style="left:11px;top:99px;width:120px;height:23px;background:#545454;border-radius:5px;"></div>
<div class="a" style="left:11px;top:99px;width:23px;height:23px;background:#4772b3;border-radius:5px 0 0 5px;"></div>
<div class="a" style="left:34px;top:99px;width:1px;height:23px;background:#3f3f3f;border-radius:0px;"></div>
<div class="a" style="left:58px;top:99px;width:1px;height:23px;background:#3f3f3f;border-radius:0px;"></div>
<div class="a" style="left:82px;top:99px;width:1px;height:23px;background:#3f3f3f;border-radius:0px;"></div>
<div class="a" style="left:106px;top:99px;width:1px;height:23px;background:#3f3f3f;border-radius:0px;"></div>
<svg class="a" style="left:11px;top:99px;" width="23" height="23" viewBox="0 0 23 23"><rect x="3.4" y="3.4" width="16.2" height="16.2" fill="none" stroke="#fff" stroke-width="1.6" stroke-dasharray="3 2.4" stroke-dashoffset="1.5"/></svg>
<svg class="a" style="left:35px;top:99px;" width="23" height="23" viewBox="0 0 23 23"><path d="M3 20.2 V9.8 H8.6 V3 H20.2 V13.4 H14.6 V20.2 Z" fill="#cfcfcf"/></svg>
<svg class="a" style="left:59px;top:99px;" width="23" height="23" viewBox="0 0 23 23"><path d="M8.6 3 H20.2 V13.4 H14.6 V9.8 H8.6Z" fill="#cfcfcf"/><path d="M3.6 10.4 V19.6 H14" fill="none" stroke="#cfcfcf" stroke-width="1.3" stroke-dasharray="2.2 2"/></svg>
<svg class="a" style="left:83px;top:99px;" width="23" height="23" viewBox="0 0 23 23"><path d="M3 9.8 H8.6 V3 H20.2 V13.4 H14.6 V20.2 H3 Z M8.6 9.8 V13.4 H14.6 V9.8 Z" fill="#cfcfcf" fill-rule="evenodd"/></svg>
<svg class="a" style="left:107px;top:99px;" width="23" height="23" viewBox="0 0 23 23"><rect x="3.6" y="3.6" width="15.8" height="15.8" fill="none" stroke="#cfcfcf" stroke-width="1.3" stroke-dasharray="2.2 2"/><rect x="8" y="8" width="7" height="7" fill="#cfcfcf"/></svg>
<div class="a" style="left:1465px;top:96px;width:120px;height:30px;background:rgba(48,48,48,0.8);border-radius:0 0 0 8px;"></div>
<div class="a" style="left:1476px;top:99px;width:100px;height:23px;background:#282828;border-radius:4px;border:1px solid #3e3e3e"></div>
<div class="t" style="left:1485px;top:103px;font-size:14px;color:#e6e6e6;">オプション</div>
<svg class="a" style="left:1562px;top:108px;" width="10" height="6" viewBox="0 0 10 6"><path d="M1 1 L5 5 L9 1" fill="none" stroke="#d8d8d8" stroke-width="1.4"/></svg>
<div class="a" style="left:11px;top:137px;width:48px;height:84px;background:#282828;border-radius:6px;"></div>
<div class="a" style="left:11px;top:137px;width:48px;height:41px;background:#4772b3;border-radius:6px 6px 0 0;"></div>
<svg class="a" style="left:20.0px;top:142.5px;" width="30" height="30" viewBox="0 0 30 30"><rect x="3" y="3" width="24" height="24" fill="none" stroke="#f5a623" stroke-width="2" stroke-dasharray="4 2.6" stroke-dashoffset="1"/><path d="M11 8 V22 L15 18 L21 18 Z" fill="#e0e0e0"/></svg>
<svg class="a" style="left:51px;top:170px;" width="6" height="5" viewBox="0 0 6 5"><path d="M5 0 V5 H0Z" fill="#9ab"/></svg>
<svg class="a" style="left:20.0px;top:184.5px;" width="30" height="30" viewBox="0 0 30 30"><circle cx="15" cy="15" r="12" fill="none" stroke="#fff" stroke-width="1.8"/><circle cx="15" cy="15" r="12" fill="none" stroke="#a52a2a" stroke-width="1.8" stroke-dasharray="6.3 6.3" stroke-dashoffset="3"/><path d="M15 7 V12.5 M15 17.5 V23 M7 15 H12.5 M17.5 15 H23" stroke="#999" stroke-width="1.6"/></svg>
<div class="a" style="left:11px;top:229px;width:48px;height:170px;background:#282828;border-radius:6px;"></div>
<div class="a" style="left:11px;top:270px;width:48px;height:1px;background:#3a3a3a;border-radius:0px;"></div>
<div class="a" style="left:11px;top:313px;width:48px;height:1px;background:#3a3a3a;border-radius:0px;"></div>
<div class="a" style="left:11px;top:356px;width:48px;height:1px;background:#3a3a3a;border-radius:0px;"></div>
<svg class="a" style="left:20.0px;top:233.7px;" width="30" height="30" viewBox="0 0 30 30"><path d="M15 1 L19 6.5 H11Z M15 29 L19 23.5 H11Z M1 15 L6.5 11 V19Z M29 15 L23.5 11 V19Z" fill="#e0e0e0"/><path d="M15 8 V12 M15 18 V22 M8 15 H12 M18 15 H22" stroke="#e0e0e0" stroke-width="1.8"/></svg>
<svg class="a" style="left:20.0px;top:276.7px;" width="30" height="30" viewBox="0 0 30 30"><path d="M7 10 A10 10 0 0 1 24 9" fill="none" stroke="#e0e0e0" stroke-width="1.5"/><path d="M23 20 A10 10 0 0 1 6 21" fill="none" stroke="#e0e0e0" stroke-width="1.5"/><path d="M15 10 L20 15 L15 20 L10 15Z" fill="#aaa"/><path d="M0.5 12 H8 L4.25 18Z M22 18 H29.5 L25.75 12Z" fill="#e0e0e0"/></svg>
<svg class="a" style="left:20.0px;top:320.0px;" width="30" height="30" viewBox="0 0 30 30"><rect x="4" y="15" width="11.5" height="11.5" fill="#e0e0e0"/><path d="M6 12 V3.5 H25.5 V23.5 H18" fill="none" stroke="#e0e0e0" stroke-width="1.6"/><path d="M15 15 L22 8" stroke="#e0e0e0" stroke-width="1.6"/><path d="M17 5.5 H24 V12.5Z" fill="#e0e0e0"/></svg>
<svg class="a" style="left:51px;top:349px;" width="6" height="5" viewBox="0 0 6 5"><path d="M5 0 V5 H0Z" fill="#8a8a8a"/></svg>
<svg class="a" style="left:20.0px;top:362.7px;" width="30" height="30" viewBox="0 0 30 30"><path d="M7 6 A12.5 12.5 0 0 1 23 6 M26 9 A12.5 12.5 0 0 1 26 21 M23 24 A12.5 12.5 0 0 1 7 24 M4 21 A12.5 12.5 0 0 1 4 9" fill="none" stroke="#e0e0e0" stroke-width="1.5"/><rect x="10" y="10" width="10" height="10" fill="#e0e0e0"/><path d="M15 1 L18.5 5.5 H11.5Z M15 29 L18.5 24.5 H11.5Z M1 15 L5.5 11.5 V18.5Z M29 15 L24.5 11.5 V18.5Z" fill="#e0e0e0"/></svg>
<div class="a" style="left:11px;top:407px;width:48px;height:84px;background:#282828;border-radius:6px;"></div>
<div class="a" style="left:11px;top:449px;width:48px;height:1px;background:#3a3a3a;border-radius:0px;"></div>
<svg class="a" style="left:20.0px;top:413.0px;" width="30" height="30" viewBox="0 0 30 30"><path d="M22 3 L27 8 L11 24 L4.5 25.5 L6 19Z" fill="#e0e0e0"/><path d="M7 20 L10 23" stroke="#282828" stroke-width="1"/><path d="M5 27 Q10 20 16 24 Q22 28 27 22" fill="none" stroke="#7fd3a8" stroke-width="1.6"/></svg>
<svg class="a" style="left:51px;top:443px;" width="6" height="5" viewBox="0 0 6 5"><path d="M5 0 V5 H0Z" fill="#8a8a8a"/></svg>
<svg class="a" style="left:20.0px;top:455.5px;" width="30" height="30" viewBox="0 0 30 30"><path d="M4.5 2 V26.5 H28" fill="none" stroke="#e0e0e0" stroke-width="2"/><path d="M7 25 V10 A15 15 0 0 1 22 25Z" fill="#7fd3a8"/><path d="M4.5 5 H8 M4.5 8.5 H7 M4.5 12 H8 M4.5 15.5 H7 M4.5 19 H8 M4.5 22.5 H7 M9 26.5 V23 M13 26.5 V24 M17 26.5 V23 M21 26.5 V24 M25 26.5 V23" stroke="#e0e0e0" stroke-width="1"/></svg>
<div class="a" style="left:11px;top:499px;width:48px;height:40px;background:#282828;border-radius:6px;"></div>
<svg class="a" style="left:19.0px;top:501.0px;" width="32" height="32" viewBox="0 0 32 32"><path d="M6 0.5 V10 M1.5 5.2 H10.5" stroke="#9fe6bf" stroke-width="2.2"/><path d="M9 12 H22 L27 6.5 H14Z M9 12 V28 H22 V12 M22 28 L27 22.5 V6.5" fill="none" stroke="#7fd3a8" stroke-width="1.3"/></svg>
<div class="t" style="left:82px;top:139px;font-size:14px;color:#e8e8e8;text-shadow:0 0 2px #000,0 0 1px #000">トップ・平行投影</div>
<div class="t" style="left:82px;top:161px;font-size:15px;color:#e8e8e8;text-shadow:0 0 2px #000,0 0 1px #000">(71) Collection | Cube</div>
<div class="t" style="left:82px;top:183px;font-size:14px;color:#e8e8e8;text-shadow:0 0 2px #000,0 0 1px #000">10センチメートル</div>
<svg class="a" style="left:247px;top:304px;" width="49" height="49" viewBox="0 0 49 49"><circle cx="24.3" cy="24.2" r="12.4" fill="none" stroke="#fff" stroke-width="1.7"/><circle cx="24.3" cy="24.2" r="12.4" fill="none" stroke="#ee1c1c" stroke-width="1.7" stroke-dasharray="4.87 4.87" stroke-dashoffset="-1.2"/><path d="M24.6 0 V18 M24.6 31 V49 M0 24.5 H18 M31 24.5 H49" stroke="#000" stroke-width="1.5"/></svg>
<div class="a" style="left:1223px;top:222px;width:213px;height:212px;background:#a6a7a9;border-radius:2px;border:2px solid #f29b2f"></div>
<svg class="a" style="left:1325px;top:324px;" width="8" height="8" viewBox="0 0 8 8"><circle cx="4" cy="4" r="2.6" fill="#f29b2f" stroke="#333" stroke-width="0.8"/></svg>
<svg class="a" style="left:1470px;top:136px;" width="106" height="106" viewBox="0 0 106 106"><line x1="52.7" y1="52.3" x2="52.7" y2="12.3" stroke="#72a61e" stroke-width="2.5"/><line x1="52.7" y1="52.3" x2="52.7" y2="91.7" stroke="#72a61e" stroke-width="2.5"/><line x1="12.7" y1="52.3" x2="93.3" y2="52.3" stroke="#d5344a" stroke-width="2.5"/><circle cx="12.7" cy="52.3" r="9.5" fill="#7a3440" stroke="#d5344a" stroke-width="1.5"/><circle cx="52.7" cy="91.7" r="9.5" fill="#55672a" stroke="#72a61e" stroke-width="1.5"/><circle cx="52.7" cy="12.3" r="10.5" fill="#72a61e"/><circle cx="93.3" cy="52.3" r="10.5" fill="#d5344a"/><circle cx="52.7" cy="52.3" r="11" fill="#3a8ee6"/><text x="52.7" y="17.3" font-size="13" font-weight="bold" text-anchor="middle" fill="#1a1a1a" font-family="Liberation Sans">Y</text><text x="93.3" y="57.3" font-size="13" font-weight="bold" text-anchor="middle" fill="#1a1a1a" font-family="Liberation Sans">X</text><text x="52.7" y="57.3" font-size="13" font-weight="bold" text-anchor="middle" fill="#1a1a1a" font-family="Liberation Sans">Z</text></svg>
<svg class="a" style="left:1540px;top:239px;" width="34" height="34" viewBox="0 0 34 34"><circle cx="17" cy="17" r="17" fill="rgba(40,40,40,0.55)"/></svg>
<svg class="a" style="left:1540px;top:277px;" width="34" height="34" viewBox="0 0 34 34"><circle cx="17" cy="17" r="17" fill="rgba(40,40,40,0.55)"/></svg>
<svg class="a" style="left:1540px;top:314px;" width="34" height="34" viewBox="0 0 34 34"><circle cx="17" cy="17" r="17" fill="rgba(40,40,40,0.55)"/></svg>
<svg class="a" style="left:1540px;top:352px;" width="34" height="34" viewBox="0 0 34 34"><circle cx="17" cy="17" r="17" fill="rgba(40,40,40,0.55)"/></svg>
<svg class="a" style="left:1547px;top:246px;" width="20" height="20" viewBox="0 0 20 20"><circle cx="11.5" cy="8" r="6" fill="none" stroke="#eee" stroke-width="2"/><path d="M7 12 L2 17" stroke="#eee" stroke-width="2.6" stroke-linecap="round"/><path d="M11.5 5 V11 M8.5 8 H14.5" stroke="#eee" stroke-width="1.5"/></svg>
<svg class="a" style="left:1547px;top:284px;" width="20" height="20" viewBox="0 0 20 20"><path d="M4 10 V5 Q4 3.5 5.5 3.5 Q7 3.5 7 5 V9 V2.5 Q7 1 8.5 1 Q10 1 10 2.5 V9 V3 Q10 1.5 11.5 1.5 Q13 1.5 13 3 V9 V5 Q13 3.5 14.5 3.5 Q16 3.5 16 5 V12 Q16 19 10 19 Q6 19 3 14 L1 10 Q1 8.5 2.5 8.5 Q3.5 8.5 4 10Z" fill="#eee"/></svg>
<svg class="a" style="left:1546px;top:321px;" width="22" height="20" viewBox="0 0 22 20"><circle cx="6" cy="5" r="4" fill="#eee"/><circle cx="14" cy="5" r="4" fill="#eee"/><rect x="3" y="9" width="13" height="8" fill="#eee"/><path d="M16 13 L21 10 V17Z" fill="#eee"/><circle cx="6" cy="5" r="1.3" fill="#caa"/><circle cx="14" cy="5" r="1.3" fill="#caa"/></svg>
<svg class="a" style="left:1547px;top:359px;" width="20" height="20" viewBox="0 0 20 20"><rect x="2" y="2" width="16" height="16" fill="none" stroke="#eee" stroke-width="1.5"/><path d="M7.3 2 V18 M12.7 2 V18 M2 7.3 H18 M2 12.7 H18" stroke="#eee" stroke-width="1.5"/></svg>
<svg class="a" style="left:1576px;top:147px;" width="8" height="12" viewBox="0 0 8 12"><path d="M6 1 L1.5 6 L6 11" fill="none" stroke="#999" stroke-width="1.3"/></svg>
<div class="a" style="left:1588px;top:63px;width:331px;height:317px;border-radius:8px;overflow:hidden;background:#282828">
<div class="a" style="left:0;top:32px;width:332px;height:25px;background:#292929"></div>
<div class="a" style="left:0;top:57px;width:332px;height:25px;background:#2c2c2c"></div>
<div class="a" style="left:0;top:82px;width:332px;height:25px;background:#292929"></div>
<div class="a" style="left:0;top:107px;width:332px;height:25px;background:#2c2c2c"></div>
<div class="a" style="left:0;top:132px;width:332px;height:25px;background:#292929"></div>
<div class="a" style="left:0;top:157px;width:332px;height:25px;background:#2c2c2c"></div>
<div class="a" style="left:0;top:182px;width:332px;height:25px;background:#292929"></div>
<div class="a" style="left:0;top:207px;width:332px;height:25px;background:#2c2c2c"></div>
<div class="a" style="left:0;top:232px;width:332px;height:25px;background:#292929"></div>
<div class="a" style="left:0;top:257px;width:332px;height:25px;background:#2c2c2c"></div>
<div class="a" style="left:0;top:282px;width:332px;height:25px;background:#292929"></div>
<div class="a" style="left:0;top:307px;width:332px;height:25px;background:#2c2c2c"></div>
<div class="a" style="left:0;top:332px;width:332px;height:25px;background:#292929"></div>
<div class="a" style="left:0;top:0;width:332px;height:32px;background:#2b2b2b"></div>
</div>
<div class="a" style="left:1598px;top:66px;width:40px;height:25px;background:#282828;border-radius:5px;border:1px solid #3a3a3a"></div>
<svg class="a" style="left:1603px;top:70px;" width="22" height="18" viewBox="0 0 22 18"><rect x="1" y="1" width="6" height="3.5" fill="#ddd"/><path d="M3 4.5 V14.5 H6 M3 9.5 H6" stroke="#ddd" stroke-width="1" fill="none"/><rect x="6.5" y="7.5" width="8" height="3.5" fill="#ddd"/><rect x="6.5" y="12.5" width="8" height="3.5" fill="#ddd"/></svg>
<svg class="a" style="left:1625px;top:77px;" width="10" height="6" viewBox="0 0 10 6"><path d="M1 1 L5 5 L9 1" fill="none" stroke="#d8d8d8" stroke-width="1.4"/></svg>
<div class="a" style="left:1644px;top:66px;width:40px;height:25px;background:#282828;border-radius:5px;border:1px solid #3a3a3a"></div>
<svg class="a" style="left:1649px;top:70px;" width="20" height="18" viewBox="0 0 20 18"><rect x="6" y="1" width="11" height="10" fill="#282828" stroke="#ddd" stroke-width="1.2"/><path d="M8 9.5 L11 5 L13 7.5 L14 6 L16 9.5Z" fill="#ddd"/><circle cx="9" cy="3.8" r="1" fill="#ddd"/><path d="M4 3.5 V13.5 H14 M2 5.5 V15.5 H12" fill="none" stroke="#ddd" stroke-width="1.1"/></svg>
<svg class="a" style="left:1671px;top:77px;" width="10" height="6" viewBox="0 0 10 6"><path d="M1 1 L5 5 L9 1" fill="none" stroke="#d8d8d8" stroke-width="1.4"/></svg>
<div class="a" style="left:1703px;top:66px;width:144px;height:25px;background:#1d1d1d;border-radius:5px;border:1px solid #383838"></div>
<svg class="a" style="left:1708px;top:69px;" width="20" height="20" viewBox="0 0 20 20"><circle cx="11.5" cy="7.5" r="5.5" fill="none" stroke="#ccc" stroke-width="1.4"/><path d="M7.5 11.5 L2 17" stroke="#ccc" stroke-width="1.4"/></svg>
<div class="a" style="left:1866px;top:66px;width:40px;height:25px;background:#282828;border-radius:5px;border:1px solid #3a3a3a"></div>
<svg class="a" style="left:1870px;top:69px;" width="20" height="20" viewBox="0 0 20 20"><path d="M2 2 H16 L10.5 9 V17 L8 14 V9 Z" fill="none" stroke="#ddd" stroke-width="1.3"/></svg>
<svg class="a" style="left:1894px;top:77px;" width="10" height="6" viewBox="0 0 10 6"><path d="M1 1 L5 5 L9 1" fill="none" stroke="#d8d8d8" stroke-width="1.4"/></svg>
<div class="a" style="left:1912px;top:66px;width:10px;height:25px;background:#3a3a3a;border-radius:5px 0 0 5px;"></div>
<svg class="a" style="left:1617px;top:100px;" width="18" height="17" viewBox="0 0 18 17"><rect x="0" y="0" width="17" height="4" fill="#e0e0e0"/><rect x="1" y="5.5" width="15" height="10.5" fill="#e0e0e0"/><rect x="6" y="8" width="5" height="2" rx="1" fill="#282828"/></svg>
<div class="t" style="left:1643px;top:100.5px;font-size:14.3px;color:#d8d8d8;">シーンコレクション</div>
<svg class="a" style="left:1621px;top:130px;" width="9" height="8" viewBox="0 0 9 8"><path d="M0.5 0.5 H8.5 L4.5 7.5Z" fill="#bbb"/></svg>
<div class="a" style="left:1638px;top:121px;width:25px;height:24px;background:#474747;border-radius:6px;border:1px solid #555"></div>
<svg class="a" style="left:1642px;top:125px;" width="18" height="17" viewBox="0 0 18 17"><rect x="0.5" y="0" width="16" height="4" fill="#e0e0e0"/><rect x="1.5" y="5.5" width="14" height="10" fill="#e0e0e0"/><rect x="6" y="8" width="5" height="2" rx="1" fill="#474747"/></svg>
<div class="t" style="left:1668.5px;top:125px;font-size:15px;color:#d8d8d8;">Collection</div>
<svg class="a" style="left:1838px;top:125px;" width="16" height="16" viewBox="0 0 16 16"><rect x="0.5" y="0.5" width="13" height="13" rx="2" fill="#e6e6e6"/><path d="M3 7 L6 10 L11 3.5" fill="none" stroke="#222" stroke-width="2"/></svg>
<svg class="a" style="left:1861px;top:124px;" width="20" height="16" viewBox="0 0 20 16"><path d="M1 8 Q10 -1 19 8 Q10 17 1 8Z" fill="#e6e6e6"/><circle cx="10" cy="8" r="4" fill="#282828"/><circle cx="10" cy="8" r="2" fill="#e6e6e6"/></svg>
<svg class="a" style="left:1887px;top:123px;" width="18" height="17" viewBox="0 0 18 17"><path d="M1 4 H5 L6.5 1.5 H11.5 L13 4 H17 V15.5 H1Z" fill="#e6e6e6"/><circle cx="9" cy="9.5" r="4.2" fill="#282828"/><circle cx="9" cy="9.5" r="2.5" fill="#e6e6e6"/></svg>
<div class="a" style="left:1588px;top:145px;width:331px;height:25px;background:#334d80;border-radius:0px;"></div>
<div class="a" style="left:1624px;top:151px;width:1px;height:14px;background:#6a7ea8;border-radius:0px;"></div>
<svg class="a" style="left:1646px;top:153px;" width="9" height="10" viewBox="0 0 9 10"><path d="M0.5 0.5 L8 5 L0.5 9.5Z" fill="#c8d0e0"/></svg>
<div class="a" style="left:1663px;top:146px;width:25px;height:23px;background:#54698f;border-radius:6px;border:1px solid #6a7fa5"></div>
<svg class="a" style="left:1666px;top:149px;" width="19" height="17" viewBox="0 0 19 17"><path d="M2 2 H17 L9.5 16Z" fill="none" stroke="#e39a45" stroke-width="3"/></svg>
<div class="t" style="left:1693px;top:151px;font-size:15px;color:#f0a53c;">Cube</div>
<svg class="a" style="left:1755px;top:148px;" width="22" height="20" viewBox="0 0 22 20"><path d="M2 3 H9 Q12 3 10 6 L6 10 Q4 12 7 13 H17 M14 10 L17.5 13 L14 16" fill="none" stroke="#b9bfcc" stroke-width="1.3"/></svg>
<svg class="a" style="left:1781px;top:148px;" width="20" height="20" viewBox="0 0 20 20"><path d="M3 3 H16 L9.5 16Z" fill="none" stroke="#1fbfb0" stroke-width="1.4"/><rect x="1" y="1" width="4" height="4" fill="#334d80" stroke="#1fbfb0" stroke-width="1.2"/><rect x="14" y="1" width="4" height="4" fill="#334d80" stroke="#1fbfb0" stroke-width="1.2"/><rect x="7.5" y="14" width="4" height="4" fill="#334d80" stroke="#1fbfb0" stroke-width="1.2"/></svg>
<svg class="a" style="left:1861px;top:149px;" width="20" height="16" viewBox="0 0 20 16"><path d="M1 8 Q10 -1 19 8 Q10 17 1 8Z" fill="#e6e6e6"/><circle cx="10" cy="8" r="4" fill="#334d80"/><circle cx="10" cy="8" r="2" fill="#e6e6e6"/></svg>
<svg class="a" style="left:1887px;top:148px;" width="18" height="17" viewBox="0 0 18 17"><path d="M1 4 H5 L6.5 1.5 H11.5 L13 4 H17 V15.5 H1Z" fill="#e6e6e6"/><circle cx="9" cy="9.5" r="4.2" fill="#334d80"/><circle cx="9" cy="9.5" r="2.5" fill="#e6e6e6"/></svg>
<div class="a" style="left:1588px;top:383px;width:331px;height:671px;background:#303030;border-radius:8px;"></div>
<div class="a" style="left:1598px;top:386px;width:40px;height:25px;background:#282828;border-radius:5px;border:1px solid #3a3a3a"></div>
<svg class="a" style="left:1604px;top:391px;" width="18" height="16" viewBox="0 0 18 16"><rect x="0.5" y="0.5" width="15" height="6.5" rx="3.25" fill="#282828" stroke="#ddd"/><rect x="0.5" y="0.5" width="8" height="6.5" rx="3.25" fill="#ddd"/><rect x="0.5" y="9" width="15" height="6.5" rx="3.25" fill="#282828" stroke="#ddd"/><rect x="0.5" y="9" width="11" height="6.5" rx="3.25" fill="#ddd"/></svg>
<svg class="a" style="left:1625px;top:397px;" width="10" height="6" viewBox="0 0 10 6"><path d="M1 1 L5 5 L9 1" fill="none" stroke="#d8d8d8" stroke-width="1.4"/></svg>
<div class="a" style="left:1677px;top:387px;width:142px;height:24px;background:#1d1d1d;border-radius:5px;border:1px solid #383838"></div>
<svg class="a" style="left:1682px;top:389px;" width="20" height="20" viewBox="0 0 20 20"><circle cx="11.5" cy="7.5" r="5.5" fill="none" stroke="#ccc" stroke-width="1.4"/><path d="M7.5 11.5 L2 17" stroke="#ccc" stroke-width="1.4"/></svg>
<div class="a" style="left:1884px;top:387px;width:25px;height:24px;background:#282828;border-radius:5px;border:1px solid #3a3a3a"></div>
<svg class="a" style="left:1891px;top:397px;" width="10" height="6" viewBox="0 0 10 6"><path d="M1 1 L5 5 L9 1" fill="none" stroke="#d8d8d8" stroke-width="1.4"/></svg>
<div class="a" style="left:1588px;top:414px;width:35px;height:640px;background:#1d1d1d;border-radius:0 0 0 8px;"></div>
<div class="a" style="left:1590px;top:697px;width:33px;height:33px;background:#303030;border-radius:6px 0 0 6px;"></div>
<svg class="a" style="left:1596px;top:431px;" width="20" height="20" viewBox="0 0 20 20"><path d="M4 2 V11 M2 11 H6 V17 H2Z" stroke="#ddd" stroke-width="1.6" fill="#ddd"/><path d="M12 2 V6 Q12 8 14 8 Q16 8 16 6 V2 M14 8 V18" stroke="#ddd" stroke-width="2" fill="none"/></svg>
<svg class="a" style="left:1596px;top:474px;" width="20" height="20" viewBox="0 0 20 20"><path d="M2 6 H18 V17 H2Z" fill="#ddd"/><path d="M5 6 L7 3 H13 L15 6" fill="#ddd"/><rect x="4" y="9" width="8" height="6" fill="#1d1d1d"/><circle cx="15" cy="12" r="1.2" fill="#1d1d1d"/></svg>
<svg class="a" style="left:1596px;top:508px;" width="20" height="20" viewBox="0 0 20 20"><path d="M2 3 H18 V11 H2Z" fill="#ddd"/><path d="M4 11 H16 V18 H4Z" fill="#ddd"/><path d="M6 16 L9 12 L11 14 L14 16Z" fill="#1d1d1d"/></svg>
<svg class="a" style="left:1596px;top:543px;" width="20" height="20" viewBox="0 0 20 20"><rect x="6" y="1" width="12" height="11" fill="#1d1d1d" stroke="#ddd" stroke-width="1.3"/><path d="M8 10 L11 5 L13 8 L14 6.5 L16 10Z" fill="#ddd"/><path d="M4 3.5 V14.5 H15 M2 6 V17 H13" fill="none" stroke="#ddd" stroke-width="1.1"/></svg>
<svg class="a" style="left:1596px;top:579px;" width="20" height="20" viewBox="0 0 20 20"><path d="M6 2 L1.5 11 Q1.5 15 6 15 Q10 15 10 11Z" fill="#ddd"/><circle cx="14" cy="5" r="2.3" fill="#ddd"/><circle cx="13" cy="13" r="4.3" fill="#1d1d1d" stroke="#ddd" stroke-width="1.4"/></svg>
<svg class="a" style="left:1596px;top:615px;" width="20" height="20" viewBox="0 0 20 20"><circle cx="10" cy="10" r="8" fill="none" stroke="#c45a5f" stroke-width="1.8"/><path d="M5 5 Q9 6 8 10 Q6 12 8 16 M12 3 Q11 7 14 8 Q17 9 16 13" fill="none" stroke="#c45a5f" stroke-width="2"/></svg>
<div class="a" style="left:1596px;top:645px;width:22px;height:1px;background:#2c2c2c;border-radius:0px;"></div>
<svg class="a" style="left:1596px;top:658px;" width="20" height="20" viewBox="0 0 20 20"><rect x="1.5" y="1.5" width="17" height="4.5" fill="#ddd"/><rect x="2.5" y="7.5" width="15" height="11" fill="none" stroke="#ddd" stroke-width="1.6"/><rect x="7" y="10" width="6" height="2" rx="1" fill="#ddd"/></svg>
<svg class="a" style="left:1596px;top:702px;" width="20" height="20" viewBox="0 0 20 20"><path d="M1 6 V1 H6 M14 1 H19 V6 M19 14 V19 H14 M6 19 H1 V14" stroke="#e08a3a" stroke-width="1.4" fill="none"/><rect x="4.5" y="4.5" width="11" height="11" fill="#e9964e"/></svg>
<svg class="a" style="left:1596px;top:737px;" width="20" height="20" viewBox="0 0 20 20"><path d="M15 2 A5 5 0 0 0 11 9 L3 17 L5 19 L13 11 A5 5 0 0 0 19 6 L16 8 L13 6 L14 3Z" fill="#5b83cc"/></svg>
<svg class="a" style="left:1596px;top:772px;" width="20" height="20" viewBox="0 0 20 20"><circle cx="4" cy="4.5" r="2.8" fill="#5b83cc"/><circle cx="16" cy="4.5" r="1.8" fill="#5b83cc"/><circle cx="4" cy="16" r="1.8" fill="#5b83cc"/><circle cx="15.5" cy="15.5" r="2.6" fill="#5b83cc"/><path d="M4 4.5 H16 M4 4.5 V16 M4 4.5 L15.5 15.5" stroke="#5b83cc" stroke-width="1.5"/></svg>
<svg class="a" style="left:1596px;top:808px;" width="20" height="20" viewBox="0 0 20 20"><circle cx="9" cy="11" r="7" fill="none" stroke="#5b83cc" stroke-width="1.8" stroke-dasharray="28 8"/><circle cx="9" cy="11" r="3" fill="#5b83cc"/><circle cx="16" cy="4" r="2.5" fill="#5b83cc"/></svg>
<svg class="a" style="left:1596px;top:843px;" width="20" height="20" viewBox="0 0 20 20"><path d="M3 15 Q0 11 5 6 Q10 1 16 2 Q19 3 18 7 Q16 14 8 17 Q5 18 3 15Z" fill="none" stroke="#5b83cc" stroke-width="1.8"/><circle cx="9" cy="11" r="3.5" fill="none" stroke="#5b83cc" stroke-width="1.6"/><circle cx="9" cy="11" r="1.3" fill="#5b83cc"/></svg>
<svg class="a" style="left:1596px;top:878px;" width="20" height="20" viewBox="0 0 20 20"><path d="M3.5 3.5 H16.5 L10 16Z" fill="none" stroke="#1fbfb0" stroke-width="1.5"/><rect x="1" y="1" width="4.5" height="4.5" fill="#1d1d1d" stroke="#1fbfb0" stroke-width="1.3"/><rect x="14.5" y="1" width="4.5" height="4.5" fill="#1d1d1d" stroke="#1fbfb0" stroke-width="1.3"/><rect x="7.8" y="14" width="4.5" height="4.5" fill="#1d1d1d" stroke="#1fbfb0" stroke-width="1.3"/></svg>
<svg class="a" style="left:1596px;top:913px;" width="20" height="20" viewBox="0 0 20 20"><circle cx="10" cy="10" r="8.2" fill="#c05a60" stroke="#c05a60" stroke-width="1.2"/><path d="M10 10 H17.2 A7.2 7.2 0 0 0 10 2.8Z" fill="#1d1d1d" transform="rotate(0 10 10)"/><path d="M10 10 H2.8 A7.2 7.2 0 0 0 10 17.2Z" fill="#1d1d1d"/></svg>
<div class="a" style="left:1588px;top:941px;width:35px;height:1px;background:#262626;border-radius:0px;"></div>
<svg class="a" style="left:1596px;top:957px;" width="20" height="20" viewBox="0 0 20 20"><rect x="1.5" y="1.5" width="17" height="17" fill="#c05a60"/><path d="M1.5 1.5 h4.25 v4.25 h-4.25z M10 1.5 h4.25 v4.25 h-4.25z M5.75 5.75 h4.25 v4.25 h-4.25z M14.25 5.75 h4.25 v4.25 h-4.25z M1.5 10 h4.25 v4.25 h-4.25z M10 10 h4.25 v4.25 h-4.25z M5.75 14.25 h4.25 v4.25 h-4.25z M14.25 14.25 h4.25 v4.25 h-4.25z" fill="#1d1d1d"/></svg>
<svg class="a" style="left:1637px;top:427px;" width="18" height="18" viewBox="0 0 18 18"><path d="M1 5 V1 H5 M13 1 H17 V5 M17 13 V17 H13 M5 17 H1 V13" stroke="#ccc" stroke-width="1.3" fill="none"/><rect x="4.5" y="4.5" width="9" height="9" fill="#e6e6e6"/></svg>
<div class="t" style="left:1665px;top:429px;font-size:15px;color:#e0e0e0;">Cube</div>
<svg class="a" style="left:1889px;top:427.5px;" width="20" height="20" viewBox="0 0 20 20"><g transform="rotate(45 10 9)"><path d="M6.5 1 H13.5 V2.6 L12.3 3.6 V8.4 L14.6 10.4 V11.8 H5.4 V10.4 L7.7 8.4 V3.6 L6.5 2.6 Z" fill="none" stroke="#999" stroke-width="1.2" stroke-linejoin="round"/><path d="M10 11.8 V18.5" stroke="#999" stroke-width="1.2"/></g></svg>
<div class="a" style="left:1634px;top:469px;width:276px;height:24px;background:#1d1d1d;border-radius:5px;border:1px solid #3a3a3a"></div>
<div class="a" style="left:1635px;top:470px;width:37px;height:22px;background:#282828;border-radius:5px 0 0 5px;"></div>
<div class="a" style="left:1672px;top:470px;width:1px;height:22px;background:#353535;border-radius:0px;"></div>
<svg class="a" style="left:1640px;top:472px;" width="18" height="18" viewBox="0 0 18 18"><path d="M1 5 V1 H5 M13 1 H17 V5 M17 13 V17 H13 M5 17 H1 V13" stroke="#ccc" stroke-width="1.3" fill="none"/><rect x="4.5" y="4.5" width="9" height="9" fill="#e6e6e6"/></svg>
<svg class="a" style="left:1660px;top:479px;" width="10" height="6" viewBox="0 0 10 6"><path d="M1 1 L5 5 L9 1" fill="none" stroke="#d8d8d8" stroke-width="1.4"/></svg>
<div class="t" style="left:1682px;top:474px;font-size:15px;color:#e0e0e0;">Cube</div>
<div class="a" style="left:1633px;top:506px;width:277px;height:350px;background:#3d3d3d;border-radius:6px;"></div>
<svg class="a" style="left:1642px;top:518px;" width="12" height="8" viewBox="0 0 12 8"><path d="M1 1.5 L6 6.5 L11 1.5" fill="none" stroke="#ccc" stroke-width="1.3"/></svg>
<div class="t" style="left:1659.5px;top:515px;font-size:14px;color:#e0e0e0;">トランスフォーム</div>
<svg class="a" style="left:1887px;top:518px;" width="16" height="8" viewBox="0 0 16 8"><rect x="0" y="0" width="2" height="2" fill="#888"/><rect x="0" y="4" width="2" height="2" fill="#888"/><rect x="4" y="0" width="2" height="2" fill="#888"/><rect x="4" y="4" width="2" height="2" fill="#888"/><rect x="8" y="0" width="2" height="2" fill="#888"/><rect x="8" y="4" width="2" height="2" fill="#888"/><rect x="12" y="0" width="2" height="2" fill="#888"/><rect x="12" y="4" width="2" height="2" fill="#888"/></svg>
<div class="a" style="left:1742px;top:548px;width:107px;height:24px;background:#467b2d;border-radius:4px 0 0 0;"></div>
<div class="t" style="left:1742px;top:552px;width:107px;text-align:center;font-size:15px;color:#e6e6e6">10 m</div>
<div class="t" style="left:1640px;top:553px;width:91.5px;text-align:right;font-size:14.5px;color:#d8d8d8">位置 X</div>
<svg class="a" style="left:1853px;top:548px;" width="20" height="20" viewBox="0 0 20 20"><path d="M0.9 8.6 A3.9 3.9 0 0 1 8.7 8.2 V10.5" fill="none" stroke="#c4c4c4" stroke-width="1.1"/><rect x="7.3" y="10.7" width="10.3" height="6.6" fill="none" stroke="#c4c4c4" stroke-width="1.1"/><rect x="11.8" y="13.1" width="1.2" height="2" fill="#c4c4c4"/></svg>
<svg class="a" style="left:1880px;top:553px;" width="15" height="15" viewBox="0 0 15 15"><path d="M7.5 1 L14 7.5 L7.5 14 L1 7.5Z" fill="none" stroke="#e0e0e0" stroke-width="1.3"/></svg>
<div class="a" style="left:1742px;top:572px;width:107px;height:24px;background:#545454;border-radius:0;"></div>
<div class="t" style="left:1742px;top:576px;width:107px;text-align:center;font-size:15px;color:#e6e6e6">0 m</div>
<div class="t" style="left:1640px;top:577px;width:91.5px;text-align:right;font-size:14.5px;color:#d8d8d8">Y</div>
<svg class="a" style="left:1853px;top:572px;" width="20" height="20" viewBox="0 0 20 20"><path d="M0.9 8.6 A3.9 3.9 0 0 1 8.7 8.2 V10.5" fill="none" stroke="#c4c4c4" stroke-width="1.1"/><rect x="7.3" y="10.7" width="10.3" height="6.6" fill="none" stroke="#c4c4c4" stroke-width="1.1"/><rect x="11.8" y="13.1" width="1.2" height="2" fill="#c4c4c4"/></svg>
<svg class="a" style="left:1884px;top:580px;" width="8" height="8" viewBox="0 0 8 8"><circle cx="4" cy="4" r="2.5" fill="#e0e0e0"/></svg>
<div class="a" style="left:1742px;top:597px;width:107px;height:24px;background:#545454;border-radius:0 0 0 4px;"></div>
<div class="t" style="left:1742px;top:601px;width:107px;text-align:center;font-size:15px;color:#e6e6e6">0 m</div>
<div class="t" style="left:1640px;top:602px;width:91.5px;text-align:right;font-size:14.5px;color:#d8d8d8">Z</div>
<svg class="a" style="left:1853px;top:597px;" width="20" height="20" viewBox="0 0 20 20"><path d="M0.9 8.6 A3.9 3.9 0 0 1 8.7 8.2 V10.5" fill="none" stroke="#c4c4c4" stroke-width="1.1"/><rect x="7.3" y="10.7" width="10.3" height="6.6" fill="none" stroke="#c4c4c4" stroke-width="1.1"/><rect x="11.8" y="13.1" width="1.2" height="2" fill="#c4c4c4"/></svg>
<svg class="a" style="left:1884px;top:605px;" width="8" height="8" viewBox="0 0 8 8"><circle cx="4" cy="4" r="2.5" fill="#e0e0e0"/></svg>
<div class="a" style="left:1742px;top:629px;width:107px;height:24px;background:#545454;border-radius:4px 0 0 0;"></div>
<div class="t" style="left:1742px;top:633px;width:107px;text-align:center;font-size:15px;color:#e6e6e6">0°</div>
<div class="t" style="left:1640px;top:634px;width:91.5px;text-align:right;font-size:14.5px;color:#d8d8d8">回転 X</div>
<svg class="a" style="left:1853px;top:629px;" width="20" height="20" viewBox="0 0 20 20"><path d="M0.9 8.6 A3.9 3.9 0 0 1 8.7 8.2 V10.5" fill="none" stroke="#c4c4c4" stroke-width="1.1"/><rect x="7.3" y="10.7" width="10.3" height="6.6" fill="none" stroke="#c4c4c4" stroke-width="1.1"/><rect x="11.8" y="13.1" width="1.2" height="2" fill="#c4c4c4"/></svg>
<svg class="a" style="left:1884px;top:637px;" width="8" height="8" viewBox="0 0 8 8"><circle cx="4" cy="4" r="2.5" fill="#e0e0e0"/></svg>
<div class="a" style="left:1742px;top:653px;width:107px;height:24px;background:#545454;border-radius:0;"></div>
<div class="t" style="left:1742px;top:657px;width:107px;text-align:center;font-size:15px;color:#e6e6e6">0°</div>
<div class="t" style="left:1640px;top:658px;width:91.5px;text-align:right;font-size:14.5px;color:#d8d8d8">Y</div>
<svg class="a" style="left:1853px;top:653px;" width="20" height="20" viewBox="0 0 20 20"><path d="M0.9 8.6 A3.9 3.9 0 0 1 8.7 8.2 V10.5" fill="none" stroke="#c4c4c4" stroke-width="1.1"/><rect x="7.3" y="10.7" width="10.3" height="6.6" fill="none" stroke="#c4c4c4" stroke-width="1.1"/><rect x="11.8" y="13.1" width="1.2" height="2" fill="#c4c4c4"/></svg>
<svg class="a" style="left:1884px;top:661px;" width="8" height="8" viewBox="0 0 8 8"><circle cx="4" cy="4" r="2.5" fill="#e0e0e0"/></svg>
<div class="a" style="left:1742px;top:678px;width:107px;height:24px;background:#545454;border-radius:0 0 0 4px;"></div>
<div class="t" style="left:1742px;top:682px;width:107px;text-align:center;font-size:15px;color:#e6e6e6">0°</div>
<div class="t" style="left:1640px;top:683px;width:91.5px;text-align:right;font-size:14.5px;color:#d8d8d8">Z</div>
<svg class="a" style="left:1853px;top:678px;" width="20" height="20" viewBox="0 0 20 20"><path d="M0.9 8.6 A3.9 3.9 0 0 1 8.7 8.2 V10.5" fill="none" stroke="#c4c4c4" stroke-width="1.1"/><rect x="7.3" y="10.7" width="10.3" height="6.6" fill="none" stroke="#c4c4c4" stroke-width="1.1"/><rect x="11.8" y="13.1" width="1.2" height="2" fill="#c4c4c4"/></svg>
<svg class="a" style="left:1884px;top:686px;" width="8" height="8" viewBox="0 0 8 8"><circle cx="4" cy="4" r="2.5" fill="#e0e0e0"/></svg>
<div class="a" style="left:1742px;top:741px;width:107px;height:24px;background:#545454;border-radius:4px 0 0 0;"></div>
<div class="t" style="left:1742px;top:745px;width:107px;text-align:center;font-size:15px;color:#e6e6e6">1.000</div>
<div class="t" style="left:1640px;top:746px;width:91.5px;text-align:right;font-size:14.5px;color:#d8d8d8">スケール X</div>
<svg class="a" style="left:1853px;top:741px;" width="20" height="20" viewBox="0 0 20 20"><path d="M0.9 8.6 A3.9 3.9 0 0 1 8.7 8.2 V10.5" fill="none" stroke="#c4c4c4" stroke-width="1.1"/><rect x="7.3" y="10.7" width="10.3" height="6.6" fill="none" stroke="#c4c4c4" stroke-width="1.1"/><rect x="11.8" y="13.1" width="1.2" height="2" fill="#c4c4c4"/></svg>
<svg class="a" style="left:1884px;top:749px;" width="8" height="8" viewBox="0 0 8 8"><circle cx="4" cy="4" r="2.5" fill="#e0e0e0"/></svg>
<div class="a" style="left:1742px;top:765px;width:107px;height:24px;background:#545454;border-radius:0;"></div>
<div class="t" style="left:1742px;top:769px;width:107px;text-align:center;font-size:15px;color:#e6e6e6">1.000</div>
<div class="t" style="left:1640px;top:770px;width:91.5px;text-align:right;font-size:14.5px;color:#d8d8d8">Y</div>
<svg class="a" style="left:1853px;top:765px;" width="20" height="20" viewBox="0 0 20 20"><path d="M0.9 8.6 A3.9 3.9 0 0 1 8.7 8.2 V10.5" fill="none" stroke="#c4c4c4" stroke-width="1.1"/><rect x="7.3" y="10.7" width="10.3" height="6.6" fill="none" stroke="#c4c4c4" stroke-width="1.1"/><rect x="11.8" y="13.1" width="1.2" height="2" fill="#c4c4c4"/></svg>
<svg class="a" style="left:1884px;top:773px;" width="8" height="8" viewBox="0 0 8 8"><circle cx="4" cy="4" r="2.5" fill="#e0e0e0"/></svg>
<div class="a" style="left:1742px;top:790px;width:107px;height:24px;background:#545454;border-radius:0 0 0 4px;"></div>
<div class="t" style="left:1742px;top:794px;width:107px;text-align:center;font-size:15px;color:#e6e6e6">1.000</div>
<div class="t" style="left:1640px;top:795px;width:91.5px;text-align:right;font-size:14.5px;color:#d8d8d8">Z</div>
<svg class="a" style="left:1853px;top:790px;" width="20" height="20" viewBox="0 0 20 20"><path d="M0.9 8.6 A3.9 3.9 0 0 1 8.7 8.2 V10.5" fill="none" stroke="#c4c4c4" stroke-width="1.1"/><rect x="7.3" y="10.7" width="10.3" height="6.6" fill="none" stroke="#c4c4c4" stroke-width="1.1"/><rect x="11.8" y="13.1" width="1.2" height="2" fill="#c4c4c4"/></svg>
<svg class="a" style="left:1884px;top:798px;" width="8" height="8" viewBox="0 0 8 8"><circle cx="4" cy="4" r="2.5" fill="#e0e0e0"/></svg>
<div class="a" style="left:1742px;top:571px;width:107px;height:1px;background:#3a3a3a;border-radius:0px;"></div>
<div class="a" style="left:1742px;top:596px;width:107px;height:1px;background:#3a3a3a;border-radius:0px;"></div>
<div class="a" style="left:1742px;top:652px;width:107px;height:1px;background:#3a3a3a;border-radius:0px;"></div>
<div class="a" style="left:1742px;top:677px;width:107px;height:1px;background:#3a3a3a;border-radius:0px;"></div>
<div class="a" style="left:1742px;top:764px;width:107px;height:1px;background:#3a3a3a;border-radius:0px;"></div>
<div class="a" style="left:1742px;top:789px;width:107px;height:1px;background:#3a3a3a;border-radius:0px;"></div>
<div class="a" style="left:1742px;top:710px;width:108px;height:23px;background:#282828;border-radius:4px;"></div>
<div class="t" style="left:1750px;top:715px;font-size:14.5px;color:#e6e6e6;">XYZ オイ...</div>
<svg class="a" style="left:1833px;top:719px;" width="10" height="6" viewBox="0 0 10 6"><path d="M1 1 L5 5 L9 1" fill="none" stroke="#d8d8d8" stroke-width="1.4"/></svg>
<div class="t" style="left:1640px;top:715px;width:91.5px;text-align:right;font-size:14.5px;color:#d8d8d8">モード</div>
<svg class="a" style="left:1884px;top:718px;" width="8" height="8" viewBox="0 0 8 8"><circle cx="4" cy="4" r="2.5" fill="#e0e0e0"/></svg>
<svg class="a" style="left:1663px;top:834px;" width="8" height="13" viewBox="0 0 8 13"><path d="M1.5 1 L6.5 6.5 L1.5 12" fill="none" stroke="#ccc" stroke-width="1.3"/></svg>
<div class="t" style="left:1678px;top:834px;font-size:14px;color:#e0e0e0;">デルタトランスフォーム</div>
<div class="a" style="left:1633px;top:859px;width:277px;height:31px;background:#3d3d3d;border-radius:6px;"></div>
<svg class="a" style="left:1647px;top:868px;" width="8" height="13" viewBox="0 0 8 13"><path d="M1.5 1 L6.5 6.5 L1.5 12" fill="none" stroke="#ccc" stroke-width="1.3"/></svg>
<div class="t" style="left:1660.5px;top:867px;font-size:14px;color:#e0e0e0;">関係</div>
<svg class="a" style="left:1887px;top:871px;" width="16" height="8" viewBox="0 0 16 8"><rect x="0" y="0" width="2" height="2" fill="#888"/><rect x="0" y="4" width="2" height="2" fill="#888"/><rect x="4" y="0" width="2" height="2" fill="#888"/><rect x="4" y="4" width="2" height="2" fill="#888"/><rect x="8" y="0" width="2" height="2" fill="#888"/><rect x="8" y="4" width="2" height="2" fill="#888"/><rect x="12" y="0" width="2" height="2" fill="#888"/><rect x="12" y="4" width="2" height="2" fill="#888"/></svg>
<div class="a" style="left:1633px;top:891px;width:277px;height:31px;background:#3d3d3d;border-radius:6px;"></div>
<svg class="a" style="left:1647px;top:900px;" width="8" height="13" viewBox="0 0 8 13"><path d="M1.5 1 L6.5 6.5 L1.5 12" fill="none" stroke="#ccc" stroke-width="1.3"/></svg>
<div class="t" style="left:1660.5px;top:899px;font-size:14px;color:#e0e0e0;">コレクション</div>
<svg class="a" style="left:1887px;top:903px;" width="16" height="8" viewBox="0 0 16 8"><rect x="0" y="0" width="2" height="2" fill="#888"/><rect x="0" y="4" width="2" height="2" fill="#888"/><rect x="4" y="0" width="2" height="2" fill="#888"/><rect x="4" y="4" width="2" height="2" fill="#888"/><rect x="8" y="0" width="2" height="2" fill="#888"/><rect x="8" y="4" width="2" height="2" fill="#888"/><rect x="12" y="0" width="2" height="2" fill="#888"/><rect x="12" y="4" width="2" height="2" fill="#888"/></svg>
<div class="a" style="left:1633px;top:924px;width:277px;height:31px;background:#3d3d3d;border-radius:6px;"></div>
<svg class="a" style="left:1647px;top:933px;" width="8" height="13" viewBox="0 0 8 13"><path d="M1.5 1 L6.5 6.5 L1.5 12" fill="none" stroke="#ccc" stroke-width="1.3"/></svg>
<div class="t" style="left:1660.5px;top:932px;font-size:14px;color:#e0e0e0;">インスタンス化</div>
<svg class="a" style="left:1887px;top:936px;" width="16" height="8" viewBox="0 0 16 8"><rect x="0" y="0" width="2" height="2" fill="#888"/><rect x="0" y="4" width="2" height="2" fill="#888"/><rect x="4" y="0" width="2" height="2" fill="#888"/><rect x="4" y="4" width="2" height="2" fill="#888"/><rect x="8" y="0" width="2" height="2" fill="#888"/><rect x="8" y="4" width="2" height="2" fill="#888"/><rect x="12" y="0" width="2" height="2" fill="#888"/><rect x="12" y="4" width="2" height="2" fill="#888"/></svg>
<div class="a" style="left:1633px;top:957px;width:277px;height:31px;background:#3d3d3d;border-radius:6px;"></div>
<svg class="a" style="left:1647px;top:966px;" width="8" height="13" viewBox="0 0 8 13"><path d="M1.5 1 L6.5 6.5 L1.5 12" fill="none" stroke="#ccc" stroke-width="1.3"/></svg>
<div class="t" style="left:1660.5px;top:965px;font-size:14px;color:#e0e0e0;">モーションパス</div>
<svg class="a" style="left:1887px;top:969px;" width="16" height="8" viewBox="0 0 16 8"><rect x="0" y="0" width="2" height="2" fill="#888"/><rect x="0" y="4" width="2" height="2" fill="#888"/><rect x="4" y="0" width="2" height="2" fill="#888"/><rect x="4" y="4" width="2" height="2" fill="#888"/><rect x="8" y="0" width="2" height="2" fill="#888"/><rect x="8" y="4" width="2" height="2" fill="#888"/><rect x="12" y="0" width="2" height="2" fill="#888"/><rect x="12" y="4" width="2" height="2" fill="#888"/></svg>
<div class="a" style="left:1633px;top:990px;width:277px;height:31px;background:#3d3d3d;border-radius:6px;"></div>
<svg class="a" style="left:1647px;top:999px;" width="8" height="13" viewBox="0 0 8 13"><path d="M1.5 1 L6.5 6.5 L1.5 12" fill="none" stroke="#ccc" stroke-width="1.3"/></svg>
<div class="t" style="left:1660.5px;top:998px;font-size:14px;color:#e0e0e0;">可視性</div>
<svg class="a" style="left:1887px;top:1002px;" width="16" height="8" viewBox="0 0 16 8"><rect x="0" y="0" width="2" height="2" fill="#888"/><rect x="0" y="4" width="2" height="2" fill="#888"/><rect x="4" y="0" width="2" height="2" fill="#888"/><rect x="4" y="4" width="2" height="2" fill="#888"/><rect x="8" y="0" width="2" height="2" fill="#888"/><rect x="8" y="4" width="2" height="2" fill="#888"/><rect x="12" y="0" width="2" height="2" fill="#888"/><rect x="12" y="4" width="2" height="2" fill="#888"/></svg>
<div class="a" style="left:1633px;top:1023px;width:277px;height:31px;background:#3d3d3d;border-radius:6px;"></div>
<svg class="a" style="left:1647px;top:1032px;" width="8" height="13" viewBox="0 0 8 13"><path d="M1.5 1 L6.5 6.5 L1.5 12" fill="none" stroke="#ccc" stroke-width="1.3"/></svg>
<div class="t" style="left:1660.5px;top:1031px;font-size:14px;color:#e0e0e0;">ビューポート表示</div>
<svg class="a" style="left:1887px;top:1035px;" width="16" height="8" viewBox="0 0 16 8"><rect x="0" y="0" width="2" height="2" fill="#888"/><rect x="0" y="4" width="2" height="2" fill="#888"/><rect x="4" y="0" width="2" height="2" fill="#888"/><rect x="4" y="4" width="2" height="2" fill="#888"/><rect x="8" y="0" width="2" height="2" fill="#888"/><rect x="8" y="4" width="2" height="2" fill="#888"/><rect x="12" y="0" width="2" height="2" fill="#888"/><rect x="12" y="4" width="2" height="2" fill="#888"/></svg>
<div class="a" style="left:1912px;top:427px;width:5px;height:558px;background:#3a3a3a;border-radius:3px;"></div>
<div class="a" style="left:1px;top:537px;width:1584px;height:517px;border-radius:8px;overflow:hidden;background:#2f2f2f">
<svg class="a" style="left:0;top:0" width="1584" height="517"><rect x="260" y="0" width="283.4" height="517" fill="#202020"/><line x1="266.90" y1="0" x2="266.90" y2="517" stroke="#161616" stroke-width="1.3"/><line x1="312.20" y1="0" x2="312.20" y2="517" stroke="#1c1c1c" stroke-width="1.3"/><line x1="357.50" y1="0" x2="357.50" y2="517" stroke="#161616" stroke-width="1.3"/><line x1="402.80" y1="0" x2="402.80" y2="517" stroke="#1c1c1c" stroke-width="1.3"/><line x1="448.10" y1="0" x2="448.10" y2="517" stroke="#161616" stroke-width="1.3"/><line x1="493.40" y1="0" x2="493.40" y2="517" stroke="#1c1c1c" stroke-width="1.3"/><line x1="538.70" y1="0" x2="538.70" y2="517" stroke="#161616" stroke-width="1.3"/><line x1="584.00" y1="0" x2="584.00" y2="517" stroke="#2a2a2a" stroke-width="1.3"/><line x1="629.30" y1="0" x2="629.30" y2="517" stroke="#1f1f1f" stroke-width="1.3"/><line x1="674.60" y1="0" x2="674.60" y2="517" stroke="#2a2a2a" stroke-width="1.3"/><line x1="719.90" y1="0" x2="719.90" y2="517" stroke="#1f1f1f" stroke-width="1.3"/><line x1="765.20" y1="0" x2="765.20" y2="517" stroke="#2a2a2a" stroke-width="1.3"/><line x1="810.50" y1="0" x2="810.50" y2="517" stroke="#1f1f1f" stroke-width="1.3"/><line x1="855.80" y1="0" x2="855.80" y2="517" stroke="#2a2a2a" stroke-width="1.3"/><line x1="901.10" y1="0" x2="901.10" y2="517" stroke="#1f1f1f" stroke-width="1.3"/><line x1="946.40" y1="0" x2="946.40" y2="517" stroke="#2a2a2a" stroke-width="1.3"/><line x1="991.70" y1="0" x2="991.70" y2="517" stroke="#1f1f1f" stroke-width="1.3"/><line x1="1037.00" y1="0" x2="1037.00" y2="517" stroke="#2a2a2a" stroke-width="1.3"/><line x1="1082.30" y1="0" x2="1082.30" y2="517" stroke="#1f1f1f" stroke-width="1.3"/><line x1="1127.60" y1="0" x2="1127.60" y2="517" stroke="#2a2a2a" stroke-width="1.3"/><line x1="1172.90" y1="0" x2="1172.90" y2="517" stroke="#1f1f1f" stroke-width="1.3"/><line x1="1218.20" y1="0" x2="1218.20" y2="517" stroke="#2a2a2a" stroke-width="1.3"/><line x1="1263.50" y1="0" x2="1263.50" y2="517" stroke="#1f1f1f" stroke-width="1.3"/><line x1="1308.80" y1="0" x2="1308.80" y2="517" stroke="#2a2a2a" stroke-width="1.3"/><line x1="1354.10" y1="0" x2="1354.10" y2="517" stroke="#1f1f1f" stroke-width="1.3"/><line x1="1399.40" y1="0" x2="1399.40" y2="517" stroke="#2a2a2a" stroke-width="1.3"/><line x1="1444.70" y1="0" x2="1444.70" y2="517" stroke="#1f1f1f" stroke-width="1.3"/><line x1="1490.00" y1="0" x2="1490.00" y2="517" stroke="#2a2a2a" stroke-width="1.3"/><line x1="1535.30" y1="0" x2="1535.30" y2="517" stroke="#1f1f1f" stroke-width="1.3"/><line x1="1580.60" y1="0" x2="1580.60" y2="517" stroke="#2a2a2a" stroke-width="1.3"/><line x1="260" y1="587.60" x2="542.4" y2="587.60" stroke="#1c1c1c" stroke-width="1.2"/><line x1="542.4" y1="587.60" x2="1584" y2="587.60" stroke="#232323" stroke-width="1.2"/><line x1="260" y1="532.90" x2="542.4" y2="532.90" stroke="#181818" stroke-width="1.2"/><line x1="542.4" y1="532.90" x2="1584" y2="532.90" stroke="#1f1f1f" stroke-width="1.2"/><line x1="260" y1="478.20" x2="542.4" y2="478.20" stroke="#1c1c1c" stroke-width="1.2"/><line x1="542.4" y1="478.20" x2="1584" y2="478.20" stroke="#232323" stroke-width="1.2"/><line x1="260" y1="423.50" x2="542.4" y2="423.50" stroke="#181818" stroke-width="1.2"/><line x1="542.4" y1="423.50" x2="1584" y2="423.50" stroke="#1f1f1f" stroke-width="1.2"/><line x1="260" y1="368.80" x2="542.4" y2="368.80" stroke="#1c1c1c" stroke-width="1.2"/><line x1="542.4" y1="368.80" x2="1584" y2="368.80" stroke="#232323" stroke-width="1.2"/><line x1="260" y1="314.10" x2="542.4" y2="314.10" stroke="#181818" stroke-width="1.2"/><line x1="542.4" y1="314.10" x2="1584" y2="314.10" stroke="#1f1f1f" stroke-width="1.2"/><line x1="260" y1="259.40" x2="542.4" y2="259.40" stroke="#1c1c1c" stroke-width="1.2"/><line x1="542.4" y1="259.40" x2="1584" y2="259.40" stroke="#232323" stroke-width="1.2"/><line x1="260" y1="204.70" x2="542.4" y2="204.70" stroke="#181818" stroke-width="1.2"/><line x1="542.4" y1="204.70" x2="1584" y2="204.70" stroke="#1f1f1f" stroke-width="1.2"/><line x1="260" y1="150.00" x2="542.4" y2="150.00" stroke="#1c1c1c" stroke-width="1.2"/><line x1="542.4" y1="150.00" x2="1584" y2="150.00" stroke="#232323" stroke-width="1.2"/><line x1="260" y1="95.30" x2="542.4" y2="95.30" stroke="#181818" stroke-width="1.2"/><line x1="542.4" y1="95.30" x2="1584" y2="95.30" stroke="#1f1f1f" stroke-width="1.2"/><line x1="260" y1="40.60" x2="542.4" y2="40.60" stroke="#1c1c1c" stroke-width="1.2"/><line x1="542.4" y1="40.60" x2="1584" y2="40.60" stroke="#232323" stroke-width="1.2"/><line x1="543.4" y1="0" x2="543.4" y2="517" stroke="#000" stroke-width="1.2"/></svg>
</div>
<div class="a" style="left:1px;top:537px;width:1584px;height:32px;background:#303030;border-radius:8px 8px 0 0;"></div>
<div class="a" style="left:11px;top:542px;width:38px;height:23px;background:#282828;border-radius:4px;border:1px solid #3e3e3e"></div>
<svg class="a" style="left:16px;top:545px;" width="22" height="18" viewBox="0 0 22 18"><path d="M2 10 H7 Q10 10 11 6 Q12 2 16 2 H18" fill="none" stroke="#e6e6e6" stroke-width="2"/><path d="M3 2.5 Q6 3 7 6" fill="none" stroke="#ccc" stroke-width="1.2"/><path d="M8 12 Q10 17 13 15 Q15 13 18 13" fill="none" stroke="#ccc" stroke-width="1.2"/></svg>
<svg class="a" style="left:38px;top:552px;" width="10" height="6" viewBox="0 0 10 6"><path d="M1 1 L5 5 L9 1" fill="none" stroke="#d8d8d8" stroke-width="1.4"/></svg>
<div class="t" style="left:66px;top:547px;font-size:14px;color:#e6e6e6;">ビュー</div>
<div class="a" style="left:261px;top:569px;width:1324px;height:27px;background:#181818;border-radius:0px;"></div>
<div class="a" style="left:1px;top:569px;width:260px;height:485px;background:#1d1d1d;border-radius:0 0 0 8px;"></div>
<div class="a" style="left:3px;top:571px;width:256px;height:24px;background:#1d1d1d;border-radius:6px;border:1px solid #333"></div>
<svg class="a" style="left:7px;top:573px;" width="20" height="20" viewBox="0 0 20 20"><circle cx="11.5" cy="7.5" r="5.5" fill="none" stroke="#ccc" stroke-width="1.4"/><path d="M7.5 11.5 L2 17" stroke="#ccc" stroke-width="1.4"/></svg>
<div class="a" style="left:1px;top:600px;width:260px;height:19px;background:#1f5189;border-radius:5px 0 0 0;"></div>
<svg class="a" style="left:5px;top:604px;" width="11" height="9" viewBox="0 0 11 9"><path d="M0.5 0.5 H10.5 L5.5 8.5Z" fill="#eee"/></svg>
<svg class="a" style="left:22px;top:600px;" width="18" height="18" viewBox="0 0 18 18"><path d="M2 2 H16 L9 17Z" fill="none" stroke="#bbb" stroke-width="3.2"/></svg>
<svg class="a" style="left:43px;top:600px;" width="20" height="20" viewBox="0 0 20 20"><g transform="rotate(45 10 9)"><path d="M6.5 1 H13.5 V2.6 L12.3 3.6 V8.4 L14.6 10.4 V11.8 H5.4 V10.4 L7.7 8.4 V3.6 L6.5 2.6 Z" fill="none" stroke="#aab" stroke-width="1.2" stroke-linejoin="round"/><path d="M10 11.8 V18.5" stroke="#aab" stroke-width="1.2"/></g></svg>
<svg class="a" style="left:64px;top:602px;" width="18" height="14" viewBox="0 0 18 14"><path d="M1 7 Q9 -1 17 7 Q9 15 1 7Z" fill="#eee"/><circle cx="9" cy="7" r="3.5" fill="#1f5189"/><circle cx="9" cy="7" r="1.6" fill="#eee"/></svg>
<div class="t" style="left:87.5px;top:601px;font-size:15px;color:#eda63a;">Cube</div>
<div class="a" style="left:8px;top:622px;width:253px;height:20px;background:#112a4b;border-radius:0px;"></div>
<svg class="a" style="left:14px;top:628px;" width="10" height="9" viewBox="0 0 10 9"><path d="M0.5 0.5 H9.5 L5 8.5Z" fill="#eee"/></svg>
<svg class="a" style="left:28px;top:622px;" width="22" height="20" viewBox="0 0 22 20"><path d="M4 1.5 L6.5 4 L4 6.5 L1.5 4Z M17 1.5 L19.5 4 L17 6.5 L14.5 4Z" fill="#ddd"/><path d="M7 2 H14 L12 4 L14 6 H7 L9 4Z" fill="#8899aa"/><path d="M10.5 10 L14 13.5 L10.5 17 L7 13.5Z" fill="none" stroke="#ddd" stroke-width="1.2"/></svg>
<div class="t" style="left:53.5px;top:624px;font-size:15px;color:#d8dde6;">CubeAction</div>
<div class="a" style="left:17px;top:644px;width:244px;height:20px;background:#1b2f2a;border-radius:8px 0 0 8px;"></div>
<svg class="a" style="left:23px;top:648px;" width="9" height="12" viewBox="0 0 9 12"><path d="M0.5 0.5 L8 6 L0.5 11.5Z" fill="#ddd"/></svg>
<svg class="a" style="left:39px;top:645px;" width="20" height="20" viewBox="0 0 20 20"><g transform="rotate(45 10 9)"><path d="M6.5 1 H13.5 V2.6 L12.3 3.6 V8.4 L14.6 10.4 V11.8 H5.4 V10.4 L7.7 8.4 V3.6 L6.5 2.6 Z" fill="none" stroke="#bbb" stroke-width="1.2" stroke-linejoin="round"/><path d="M10 11.8 V18.5" stroke="#bbb" stroke-width="1.2"/></g></svg>
<svg class="a" style="left:61px;top:647px;" width="17" height="14" viewBox="0 0 17 14"><path d="M1 7 Q8.5 -1 16 7 Q8.5 15 1 7Z" fill="#eee"/><circle cx="8.5" cy="7" r="3.5" fill="#1b2f2a"/><circle cx="8.5" cy="7" r="1.6" fill="#eee"/></svg>
<div class="t" style="left:83.5px;top:646px;width:102px;overflow:hidden;font-size:15px;color:#d0d0d0">Object Transforms</div>
<svg class="a" style="left:183px;top:646px;" width="17" height="17" viewBox="0 0 17 17"><path d="M13 1 A4.5 4.5 0 0 0 9.5 7 L2 14.5 L3.5 16 L11 8.5 A4.5 4.5 0 0 0 16 4 L13.5 5.5 L11.5 4 L12.5 1.5Z" fill="#eee"/></svg>
<svg class="a" style="left:207px;top:647px;" width="14" height="14" viewBox="0 0 14 14"><rect x="0.5" y="0.5" width="13" height="13" rx="2" fill="#cfcfcf"/><path d="M3 7 L6 10 L11 3.5" fill="none" stroke="#1b2f2a" stroke-width="2"/></svg>
<svg class="a" style="left:227px;top:646px;" width="18" height="17" viewBox="0 0 18 17"><path d="M1.5 9 V5 A3.5 3.5 0 0 1 8.5 5 V7" fill="none" stroke="#ccc" stroke-width="1.2"/><rect x="5.5" y="8.5" width="11" height="7" fill="none" stroke="#ccc" stroke-width="1.2"/><rect x="10.3" y="11" width="1.5" height="2" fill="#ccc"/></svg>
<div class="t" style="left:781.5px;top:575px;width:60px;text-align:center;font-size:15px;color:#c4c4c4">60</div>
<div class="t" style="left:872.1px;top:575px;width:60px;text-align:center;font-size:15px;color:#c4c4c4">80</div>
<div class="t" style="left:962.7px;top:575px;width:60px;text-align:center;font-size:15px;color:#c4c4c4">100</div>
<div class="t" style="left:1053.3px;top:575px;width:60px;text-align:center;font-size:15px;color:#c4c4c4">120</div>
<div class="t" style="left:1143.9px;top:575px;width:60px;text-align:center;font-size:15px;color:#c4c4c4">140</div>
<div class="t" style="left:1234.5px;top:575px;width:60px;text-align:center;font-size:15px;color:#c4c4c4">160</div>
<div class="t" style="left:1325.1px;top:575px;width:60px;text-align:center;font-size:15px;color:#c4c4c4">180</div>
<div class="t" style="left:1415.7px;top:575px;width:60px;text-align:center;font-size:15px;color:#c4c4c4">200</div>
<div class="t" style="left:1506.3px;top:575px;width:60px;text-align:center;font-size:15px;color:#c4c4c4">220</div>
<svg class="a" style="left:0px;top:0px;" width="1920" height="1080" viewBox="0 0 1920 1080"><line x1="262" y1="960.6" x2="1585" y2="960.6" stroke="#3b5f9c" stroke-width="2"/><line x1="262" y1="960.6" x2="544" y2="960.6" stroke="#ff3359" stroke-width="2" opacity="0.45"/><line x1="262" y1="961.8" x2="544" y2="961.8" stroke="#9a3a5a" stroke-width="0.8" opacity="0.8"/><line x1="544" y1="960.8" x2="766" y2="741.7" stroke="#ff3359" stroke-width="2.5"/><line x1="766" y1="741.7" x2="1585" y2="741.7" stroke="#ff3359" stroke-width="2.6"/><circle cx="544" cy="960.6" r="3.3" fill="#fff"/><line x1="540.5" y1="960.6" x2="547.5" y2="960.6" stroke="#5a7ab0" stroke-width="1.3"/><circle cx="766" cy="741.7" r="3.4" fill="#ff9d1c"/></svg>
<div class="a" style="left:859.33px;top:592px;width:4px;height:462px;background:rgba(0,0,0,.45)"></div>
<div class="a" style="left:860.33px;top:592px;width:2px;height:462px;background:#4d7acb"></div>
<div class="a" style="left:847px;top:572px;width:29px;height:21px;background:#4772b3;border-radius:5px;"></div>
<div class="t" style="left:847px;top:575px;width:29px;text-align:center;font-size:15px;color:#f0f0f0">71</div>
<div class="t" style="left:272.5px;top:624.8px;font-size:14.5px;color:#d0d0d0;text-shadow:0 0 2px #000">15</div>
<div class="t" style="left:272.5px;top:734.2px;font-size:14.5px;color:#d0d0d0;text-shadow:0 0 2px #000">10</div>
<div class="t" style="left:272.5px;top:843.6px;font-size:14.5px;color:#d0d0d0;text-shadow:0 0 2px #000">5</div>
<div class="t" style="left:272.5px;top:953.0px;font-size:14.5px;color:#d0d0d0;text-shadow:0 0 2px #000">0</div>
<div class="a" style="left:272px;top:1041px;width:1301px;height:10px;background:#575757;border-radius:5px;"></div>
<svg class="a" style="left:272px;top:1041px;" width="11" height="11" viewBox="0 0 11 11"><circle cx="5" cy="5" r="4" fill="#2a2a2a" stroke="#777" stroke-width="1"/></svg>
<div class="a" style="left:1573px;top:608px;width:11px;height:418px;background:#575757;border-radius:5px;"></div>
<svg class="a" style="left:1573px;top:608px;" width="11" height="11" viewBox="0 0 11 11"><circle cx="5.5" cy="5.5" r="4" fill="#2a2a2a" stroke="#777" stroke-width="1"/></svg>
<svg class="a" style="left:1576px;top:588px;" width="8" height="12" viewBox="0 0 8 12"><path d="M6 1 L1.5 6 L6 11" fill="none" stroke="#999" stroke-width="1.3"/></svg>
<div class="a" style="left:283px;top:1005px;width:198px;height:28px;background:#1a1a1a;border-radius:5px;"></div>
<svg class="a" style="left:293px;top:1013px;" width="8" height="13" viewBox="0 0 8 13"><path d="M1.5 1 L6.5 6.5 L1.5 12" fill="none" stroke="#bbb" stroke-width="1.2"/></svg>
<div class="t" style="left:309.5px;top:1012px;font-size:14px;color:#c8c8c8;">キーフレーム補間を設定</div>
<div class="a" style="left:1252px;top:542px;width:73px;height:23px;background:#545454;border-radius:5px;border:1px solid #545454"></div>
<div class="a" style="left:1252px;top:542px;width:23px;height:23px;background:#4772b3;border-radius:5px 0 0 5px;"></div>
<div class="a" style="left:1275px;top:542px;width:1px;height:23px;background:#444;border-radius:0px;"></div>
<div class="a" style="left:1300px;top:542px;width:1px;height:23px;background:#444;border-radius:0px;"></div>
<svg class="a" style="left:1255px;top:545px;" width="18" height="18" viewBox="0 0 18 18"><path d="M4 2 L15 7 L10 9 L8 14Z" fill="#fff"/></svg>
<svg class="a" style="left:1279px;top:545px;" width="18" height="18" viewBox="0 0 18 18"><path d="M2 5 V2 H5 M13 2 H16 V5 M16 13 V16 H13 M5 16 H2 V13 M7 2 H11 M7 16 H11 M2 7 V11 M16 7 V11" stroke="#ddd" stroke-width="1.3" fill="none"/></svg>
<svg class="a" style="left:1304px;top:545px;" width="18" height="18" viewBox="0 0 18 18"><path d="M9 1.5 L17 16 H1Z" fill="#ddd"/><rect x="8" y="6" width="2" height="6" fill="#545454"/><rect x="8" y="13" width="2" height="2" fill="#545454"/></svg>
<div class="a" style="left:1333px;top:542px;width:23px;height:23px;background:#545454;border-radius:5px;border:1px solid #545454"></div>
<svg class="a" style="left:1336px;top:545px;" width="18" height="18" viewBox="0 0 18 18"><rect x="2" y="2" width="13" height="13" fill="none" stroke="#ccc" stroke-width="1.2"/><path d="M4 13 Q8 4 13 5" fill="none" stroke="#ccc" stroke-width="1.2"/><path d="M8 16 H17 M14 14 V18" stroke="#ccc" stroke-width="1.2"/></svg>
<div class="a" style="left:1364px;top:542px;width:39px;height:23px;background:#282828;border-radius:4px;border:1px solid #3e3e3e"></div>
<svg class="a" style="left:1367px;top:545px;" width="20" height="18" viewBox="0 0 20 18"><path d="M2 2 H16 L10.5 9 V17 L8 14 V9 Z" fill="none" stroke="#ddd" stroke-width="1.3"/></svg>
<svg class="a" style="left:1389px;top:552px;" width="10" height="6" viewBox="0 0 10 6"><path d="M1 1 L5 5 L9 1" fill="none" stroke="#d8d8d8" stroke-width="1.4"/></svg>
<div class="a" style="left:1410px;top:542px;width:38px;height:23px;background:#282828;border-radius:4px;border:1px solid #3e3e3e"></div>
<svg class="a" style="left:1410px;top:542px;" width="38" height="23" viewBox="0 0 38 23"><path d="M5.4 8.4 V3.6 H10.5 M17.5 3.6 H22.6 V8.4 M22.6 14.6 V19.6 H17.5 M10.5 19.6 H5.4 V14.6" stroke="#c8c8c8" stroke-width="1.3" fill="none"/><circle cx="13.8" cy="11.6" r="2.7" fill="#e6e6e6"/></svg>
<svg class="a" style="left:1436px;top:552px;" width="10" height="6" viewBox="0 0 10 6"><path d="M1 1 L5 5 L9 1" fill="none" stroke="#d8d8d8" stroke-width="1.4"/></svg>
<div class="a" style="left:1456px;top:542px;width:48px;height:23px;background:#282828;border-radius:4px;border:1px solid #3e3e3e"></div>
<div class="a" style="left:1456px;top:542px;width:23px;height:23px;background:#4772b3;border-radius:5px 0 0 5px;"></div>
<svg class="a" style="left:1456px;top:542px;" width="23" height="23" viewBox="0 0 23 23"><path d="M7.12 4.73 L7.83 4.03 A7.6 7.6 0 0 1 18.57 14.77 L17.87 15.48 L14.76 12.37 L15.46 11.66 A3.2 3.2 0 0 0 10.94 7.14 L10.23 7.84 Z M6.41 5.44 L4.15 7.70 L7.26 10.81 L9.52 8.55 Z M17.16 16.19 L14.90 18.45 L11.79 15.34 L14.05 13.08 Z" fill="#fff"/><path d="M2.4 20.2 H5.4 V17.6 H7.6 V16" fill="none" stroke="#a9c0e6" stroke-width="1"/></svg>
<svg class="a" style="left:1486px;top:552px;" width="10" height="6" viewBox="0 0 10 6"><path d="M1 1 L5 5 L9 1" fill="none" stroke="#d8d8d8" stroke-width="1.4"/></svg>
<div class="a" style="left:1512px;top:542px;width:63px;height:23px;background:#282828;border-radius:4px;border:1px solid #3e3e3e"></div>
<div class="a" style="left:1512px;top:542px;width:24px;height:23px;background:#484848;border-radius:5px 0 0 5px;"></div>
<svg class="a" style="left:1512px;top:542px;" width="24" height="23" viewBox="0 0 24 23"><circle cx="11.6" cy="11.6" r="8.2" fill="none" stroke="#888" stroke-width="1.1"/><circle cx="11.6" cy="11.6" r="2.8" fill="#c8c8c8"/></svg>
<svg class="a" style="left:1539px;top:545px;" width="20" height="18" viewBox="0 0 20 18"><path d="M1 16 C5.5 16 6 1.5 9.5 1.5 C13 1.5 13.5 16 18 16" fill="none" stroke="#b0b0b0" stroke-width="1.2"/></svg>
<svg class="a" style="left:1562px;top:552px;" width="10" height="6" viewBox="0 0 10 6"><path d="M1 1 L5 5 L9 1" fill="none" stroke="#555" stroke-width="1.4"/></svg>
<div class="a" style="left:0px;top:1054px;width:1920px;height:26px;background:#181818;border-radius:0px;"></div>
<svg class="a" style="left:15px;top:1059px;" width="14" height="20" viewBox="0 0 14 20"><rect x="1" y="1" width="12" height="18" rx="5" fill="none" stroke="#bbb" stroke-width="1.3"/><path d="M7 1.5 V8 H1.5 V6 A5 5 0 0 1 7 1.5Z" fill="#bbb"/></svg>
<div class="t" style="left:43px;top:1062px;font-size:14px;color:#bdbdbd;">左右を選択</div>
<svg class="a" style="left:296px;top:1059px;" width="14" height="20" viewBox="0 0 14 20"><rect x="1" y="1" width="12" height="18" rx="5" fill="none" stroke="#bbb" stroke-width="1.3"/><rect x="5" y="3.5" width="4" height="6" rx="2" fill="#bbb"/></svg>
<div class="t" style="left:324.5px;top:1062px;font-size:14px;color:#bdbdbd;">2Dビューズーム</div>
<svg class="a" style="left:577px;top:1059px;" width="14" height="20" viewBox="0 0 14 20"><rect x="1" y="1" width="12" height="18" rx="5" fill="none" stroke="#bbb" stroke-width="1.3"/><path d="M7 1.5 V8 H12.5 V6 A5 5 0 0 0 7 1.5Z" fill="#bbb"/></svg>
<div class="t" style="left:605px;top:1062px;font-size:14px;color:#bdbdbd;">クリックしてキーフレームを挿入</div>
<div class="t" style="left:1870px;top:1061px;font-size:15px;color:#9a9a9a;letter-spacing:0.6px">4.0.1</div>
<div class="a" style="left:892px;top:674px;width:631px;height:267px;background:#1c1c1c;border-radius:6px;box-shadow:0 2px 6px rgba(0,0,0,.35)"></div>
<div class="t" style="left:903px;top:686px;font-size:14px;color:#bdbdbd;">キーフレーム補間を設定</div>
<div class="a" style="left:892px;top:708px;width:215px;height:1px;background:#333;border-radius:0px;"></div>
<div class="t" style="left:903px;top:719px;font-size:14px;color:#bdbdbd;">補間</div>
<div class="t" style="left:1118px;top:719px;font-size:14px;color:#bdbdbd;">イージング(強さ準拠)</div>
<div class="t" style="left:1316.5px;top:719px;font-size:14px;color:#bdbdbd;">ダイナミックエフェクト</div>
<div class="a" style="left:892px;top:743px;width:631px;height:1px;background:#333;border-radius:0px;"></div>
<svg class="a" style="left:906px;top:752px;" width="20" height="20" viewBox="0 0 20 20"><path d="M3 17 H9 V3 H17" fill="none" stroke="#ccc" stroke-width="1.2"/></svg>
<div class="t" style="left:934px;top:756.5px;font-size:14px;color:#d8d8d8;">一定</div>
<div class="t" style="left:1088px;top:755px;font-size:14px;color:#888;">T</div>
<div class="a" style="left:896px;top:778px;width:207px;height:23px;background:#474747;border-radius:4px;"></div>
<svg class="a" style="left:906px;top:779px;" width="20" height="20" viewBox="0 0 20 20"><path d="M2 18 L18 2" stroke="#e6e6e6" stroke-width="1.4"/></svg>
<div class="t" style="left:934px;top:782px;font-size:14px;color:#e6e6e6;">リニア</div>
<div class="t" style="left:1088px;top:782px;font-size:14px;color:#999;">T</div>
<svg class="a" style="left:906px;top:806px;" width="20" height="20" viewBox="0 0 20 20"><path d="M2 17 Q10 17 11 10 Q12 3 18 3" fill="none" stroke="#ccc" stroke-width="1.2"/><circle cx="11" cy="15" r="1.5" fill="none" stroke="#ccc"/></svg>
<div class="t" style="left:934px;top:809px;font-size:14px;color:#d8d8d8;">ベジェ</div>
<svg class="a" style="left:1121px;top:752px;" width="20" height="20" viewBox="0 0 20 20"><path d="M2 18 Q10 18 17 3" fill="none" stroke="#ccc" stroke-width="1.3"/><text x="1" y="8" font-size="9" fill="#ccc" font-family="Liberation Sans">1</text></svg>
<div class="t" style="left:1149.5px;top:755px;font-size:14px;color:#d8d8d8;">正弦曲線</div>
<div class="t" style="left:1286px;top:755px;font-size:14px;color:#888;">T</div>
<svg class="a" style="left:1121px;top:779px;" width="20" height="20" viewBox="0 0 20 20"><path d="M2 18 Q10 18 17 3" fill="none" stroke="#ccc" stroke-width="1.3"/><text x="1" y="8" font-size="9" fill="#ccc" font-family="Liberation Sans">2</text></svg>
<div class="t" style="left:1149.5px;top:782px;font-size:14px;color:#d8d8d8;">二次式</div>
<div class="t" style="left:1286px;top:782px;font-size:14px;color:#888;">T</div>
<svg class="a" style="left:1121px;top:806px;" width="20" height="20" viewBox="0 0 20 20"><path d="M2 18 Q10 18 17 3" fill="none" stroke="#ccc" stroke-width="1.3"/><text x="1" y="8" font-size="9" fill="#ccc" font-family="Liberation Sans">3</text></svg>
<div class="t" style="left:1149.5px;top:809px;font-size:14px;color:#d8d8d8;">三次式</div>
<div class="t" style="left:1286px;top:809px;font-size:14px;color:#888;">T</div>
<svg class="a" style="left:1121px;top:833px;" width="20" height="20" viewBox="0 0 20 20"><path d="M2 18 Q10 18 17 3" fill="none" stroke="#ccc" stroke-width="1.3"/><text x="1" y="8" font-size="9" fill="#ccc" font-family="Liberation Sans">4</text></svg>
<div class="t" style="left:1149.5px;top:836px;font-size:14px;color:#d8d8d8;">四次式</div>
<div class="t" style="left:1286px;top:836px;font-size:14px;color:#888;">T</div>
<svg class="a" style="left:1121px;top:860px;" width="20" height="20" viewBox="0 0 20 20"><path d="M2 18 Q10 18 17 3" fill="none" stroke="#ccc" stroke-width="1.3"/><text x="1" y="8" font-size="9" fill="#ccc" font-family="Liberation Sans">5</text></svg>
<div class="t" style="left:1149.5px;top:863px;font-size:14px;color:#d8d8d8;">五次式</div>
<div class="t" style="left:1286px;top:863px;font-size:14px;color:#888;">T</div>
<svg class="a" style="left:1121px;top:887px;" width="20" height="20" viewBox="0 0 20 20"><path d="M2 18 Q10 18 17 3" fill="none" stroke="#ccc" stroke-width="1.3"/></svg>
<div class="t" style="left:1149.5px;top:890px;font-size:14px;color:#d8d8d8;">指数</div>
<div class="t" style="left:1286px;top:890px;font-size:14px;color:#888;">T</div>
<svg class="a" style="left:1121px;top:914px;" width="20" height="20" viewBox="0 0 20 20"><path d="M2 18 Q10 18 17 3" fill="none" stroke="#ccc" stroke-width="1.3"/></svg>
<div class="t" style="left:1149.5px;top:917px;font-size:14px;color:#d8d8d8;">円形</div>
<div class="t" style="left:1286px;top:917px;font-size:14px;color:#888;">T</div>
<svg class="a" style="left:1320px;top:752px;" width="20" height="20" viewBox="0 0 20 20"><path d="M2 12 Q6 18 10 15 Q14 11 17 2" fill="none" stroke="#ccc" stroke-width="1.3"/></svg>
<div class="t" style="left:1346px;top:755px;font-size:14px;color:#d8d8d8;">後</div>
<div class="t" style="left:1502px;top:755px;font-size:14px;color:#888;">T</div>
<svg class="a" style="left:1320px;top:779px;" width="20" height="20" viewBox="0 0 20 20"><path d="M2 3 Q4 14 6 18 Q8 12 10 18 Q11 15 13 18 Q14 17 17 18" fill="none" stroke="#ccc" stroke-width="1.2"/></svg>
<div class="t" style="left:1346px;top:782px;font-size:14px;color:#d8d8d8;">バウンス</div>
<div class="t" style="left:1502px;top:782px;font-size:14px;color:#888;">T</div>
<svg class="a" style="left:1320px;top:806px;" width="20" height="20" viewBox="0 0 20 20"><path d="M2 3 Q5 18 8 13 Q11 8 17 16" fill="none" stroke="#ccc" stroke-width="1.2"/></svg>
<div class="t" style="left:1346px;top:809px;font-size:14px;color:#d8d8d8;">ゴム状</div>
<div class="t" style="left:1502px;top:809px;font-size:14px;color:#888;">T</div>
<div class="a" style="left:1026px;top:814px;width:516px;height:57px;background:#1c1c1c;border-radius:6px;border:1px solid #2a2a2a;box-shadow:0 2px 8px rgba(0,0,0,.4)"></div>
<div class="t" style="left:1042px;top:827px;font-size:14px;color:#c8c8c8;">そのFカーブの選択中のキーフレーム以降の部分の補間モードの設定: <span style="color:#8fa7cf">リニア</span></div>
<div class="t" style="left:1042px;top:844px;font-size:14px;color:#c8c8c8;">AとBの間を直線で補間します（要はイーズイン・アウトなし）</div>
<div class="a" style="left:73px;top:528px;width:731px;height:78px;background:#ffffff;border-radius:0px;"></div>
<div class="t" style="left:75.5px;top:545.5px;font-size:33px;color:#000;font-weight:bold;-webkit-text-stroke:0.3px #000">開始点と終了点を選択しないと反映されません</div>
<svg class="a" style="left:0px;top:0px;" width="1920" height="1080" viewBox="0 0 1920 1080"><ellipse cx="543.3" cy="957.3" rx="52.9" ry="47.7" fill="none" stroke="#ed1c24" stroke-width="7.6"/><ellipse cx="766" cy="741.1" rx="54.5" ry="52" fill="none" stroke="#ed1c24" stroke-width="7.6"/><line x1="471.5" y1="614.5" x2="523.5" y2="894" stroke="#ed1c24" stroke-width="6.5" stroke-linecap="round"/><line x1="555" y1="613" x2="720" y2="692.5" stroke="#ed1c24" stroke-width="7.2" stroke-linecap="round"/><rect x="876.5" y="765.5" width="240.5" height="47.5" fill="none" stroke="#ed1c24" stroke-width="8"/></svg></body></html>
